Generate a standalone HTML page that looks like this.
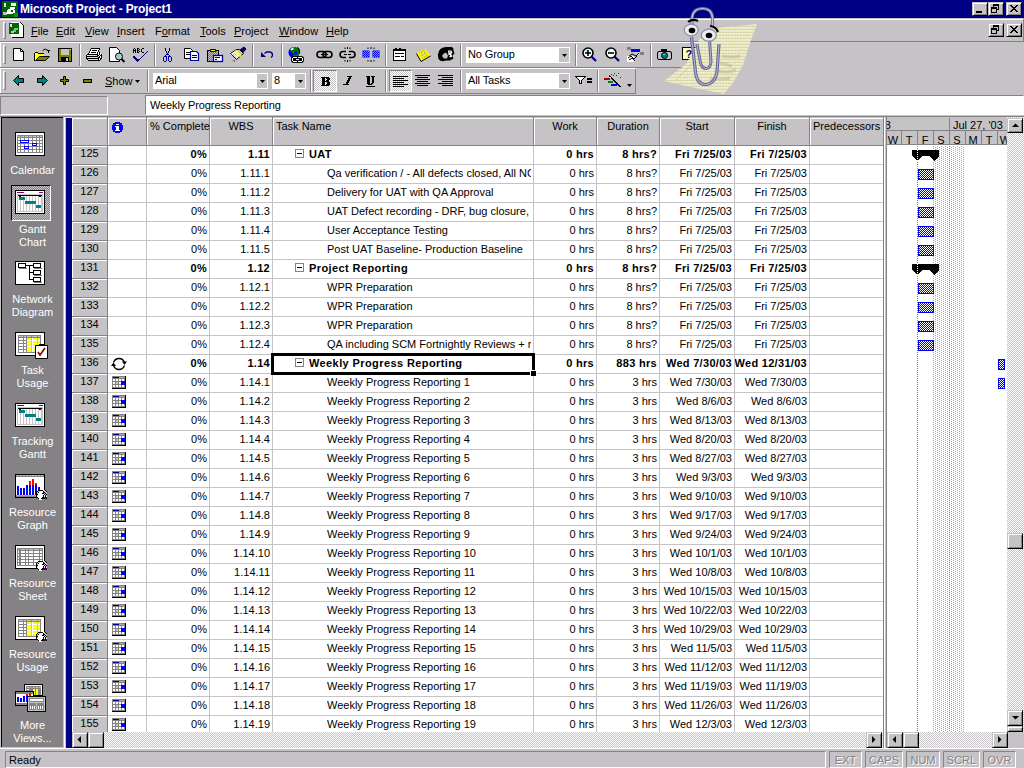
<!DOCTYPE html>
<html><head><meta charset="utf-8"><style>
*{margin:0;padding:0;box-sizing:border-box}
html,body{width:1024px;height:768px;overflow:hidden;background:#c6c3c6;font-family:"Liberation Sans",sans-serif;font-size:11px;color:#000}
div,span,svg{position:absolute}
.t{white-space:nowrap;line-height:13px}
.b{font-weight:bold}
.g{overflow:hidden;white-space:nowrap;line-height:13px}
.r{text-align:right}
.c{text-align:center}
.dith2{background-color:#c6c3c6;background-image:linear-gradient(45deg,#848284 25%,transparent 25%,transparent 75%,#848284 75%),linear-gradient(45deg,#848284 25%,transparent 25%,transparent 75%,#848284 75%);background-size:2px 2px;background-position:0 0,1px 1px}
.dith{background-color:#fff;background-image:linear-gradient(45deg,#c6c3c6 25%,transparent 25%,transparent 75%,#c6c3c6 75%),linear-gradient(45deg,#c6c3c6 25%,transparent 25%,transparent 75%,#c6c3c6 75%);background-size:2px 2px;background-position:0 0,1px 1px}
</style></head><body>

<div style="left:0px;top:0px;width:1024px;height:18px;background:#000084"></div>
<div class="t" style="left:20px;top:2px;color:#fff;font-size:12px;line-height:14px;font-weight:bold;letter-spacing:-0.15px">Microsoft Project - Project1</div>
<svg style="left:2px;top:1px" width="16" height="16" shape-rendering="crispEdges"><rect width="16" height="16" fill="#006400"/><rect x="12" y="12" width="4" height="4" fill="#00a000"/><rect x="2" y="2" width="2" height="4" fill="#e0e0e0"/><rect x="9" y="2" width="5" height="3" fill="#fff"/><path d="M8 6h5v2h-1v1h1v3h-2v1h-4v-1h-2v-2h1v-2h2z" fill="#fff"/><rect x="9" y="9" width="2" height="2" fill="#006400"/><rect x="1" y="11" width="4" height="3" fill="#c0c0c0"/><rect x="5" y="9" width="2" height="4" fill="#fff"/></svg>
<div style="left:972px;top:2px;width:16px;height:14px;background:#c6c3c6;border-top:1px solid #c6c3c6;border-left:1px solid #c6c3c6;border-right:1px solid #000;border-bottom:1px solid #000;box-shadow:inset 1px 1px 0 #fff,inset -1px -1px 0 #848284;"></div>
<div style="left:976px;top:11px;width:6px;height:2px;background:#000"></div>
<div style="left:988px;top:2px;width:16px;height:14px;background:#c6c3c6;border-top:1px solid #c6c3c6;border-left:1px solid #c6c3c6;border-right:1px solid #000;border-bottom:1px solid #000;box-shadow:inset 1px 1px 0 #fff,inset -1px -1px 0 #848284;"></div>
<svg style="left:991px;top:4px" width="9" height="9" shape-rendering="crispEdges"><rect x="2" y="0" width="6" height="2" fill="#000"/><rect x="7" y="2" width="1" height="4" fill="#000"/><rect x="6" y="5" width="1" height="1" fill="#000"/><rect x="2" y="2" width="1" height="1" fill="#000"/><rect x="0" y="3" width="6" height="2" fill="#000"/><rect x="0" y="5" width="1" height="4" fill="#000"/><rect x="5" y="5" width="1" height="4" fill="#000"/><rect x="0" y="8" width="6" height="1" fill="#000"/></svg>
<div style="left:1006px;top:2px;width:16px;height:14px;background:#c6c3c6;border-top:1px solid #c6c3c6;border-left:1px solid #c6c3c6;border-right:1px solid #000;border-bottom:1px solid #000;box-shadow:inset 1px 1px 0 #fff,inset -1px -1px 0 #848284;"></div>
<svg style="left:1010px;top:5px" width="8" height="7" shape-rendering="crispEdges"><path d="M0 0h2v1h1v1h2v-1h1v-1h2v1h-1v1h-1v1h-1v1h1v1h1v1h1v1h-2v-1h-1v-1h-2v1h-1v1h-2v-1h1v-1h1v-1h1v-1h-1v-1h-1v-1h-1z" fill="#000"/></svg>
<div style="left:0px;top:19px;width:1024px;height:1px;background:#fff"></div>
<div style="left:0px;top:41px;width:1024px;height:1px;background:#848284"></div>
<div style="left:3px;top:22px;width:3px;height:17px;border-left:1px solid #fff;border-top:1px solid #fff;border-right:1px solid #848284;border-bottom:1px solid #848284"></div>
<svg style="left:9px;top:22px" width="17" height="17" shape-rendering="crispEdges"><path d="M2 0h9l3 3v12h-12z" fill="#fff"/><rect x="14" y="3" width="1" height="13" fill="#000"/><rect x="3" y="15" width="12" height="1" fill="#000"/><path d="M11 0l3 3" stroke="#000"/><rect x="0" y="1" width="10" height="11" fill="#006400"/><rect x="1" y="2" width="2" height="3" fill="#e0e0e0"/><path d="M5 6h4v2h-2v2h-3v-2h1z" fill="#80c080"/><rect x="2" y="9" width="3" height="2" fill="#c0c0c0"/></svg>
<div class="t" style="left:31px;top:25px;font-size:11px"><u>F</u>ile</div>
<div class="t" style="left:56px;top:25px;font-size:11px"><u>E</u>dit</div>
<div class="t" style="left:85px;top:25px;font-size:11px"><u>V</u>iew</div>
<div class="t" style="left:117px;top:25px;font-size:11px"><u>I</u>nsert</div>
<div class="t" style="left:155px;top:25px;font-size:11px">F<u>o</u>rmat</div>
<div class="t" style="left:200px;top:25px;font-size:11px"><u>T</u>ools</div>
<div class="t" style="left:234px;top:25px;font-size:11px"><u>P</u>roject</div>
<div class="t" style="left:279px;top:25px;font-size:11px"><u>W</u>indow</div>
<div class="t" style="left:326px;top:25px;font-size:11px"><u>H</u>elp</div>
<div style="left:988px;top:23px;width:16px;height:14px;background:#c6c3c6;border-top:1px solid #c6c3c6;border-left:1px solid #c6c3c6;border-right:1px solid #000;border-bottom:1px solid #000;box-shadow:inset 1px 1px 0 #fff,inset -1px -1px 0 #848284;"></div>
<svg style="left:991px;top:25px" width="9" height="9" shape-rendering="crispEdges"><rect x="2" y="0" width="6" height="2" fill="#000"/><rect x="7" y="2" width="1" height="4" fill="#000"/><rect x="6" y="5" width="1" height="1" fill="#000"/><rect x="2" y="2" width="1" height="1" fill="#000"/><rect x="0" y="3" width="6" height="2" fill="#000"/><rect x="0" y="5" width="1" height="4" fill="#000"/><rect x="5" y="5" width="1" height="4" fill="#000"/><rect x="0" y="8" width="6" height="1" fill="#000"/></svg>
<div style="left:1006px;top:23px;width:16px;height:14px;background:#c6c3c6;border-top:1px solid #c6c3c6;border-left:1px solid #c6c3c6;border-right:1px solid #000;border-bottom:1px solid #000;box-shadow:inset 1px 1px 0 #fff,inset -1px -1px 0 #848284;"></div>
<svg style="left:1010px;top:26px" width="8" height="7" shape-rendering="crispEdges"><path d="M0 0h2v1h1v1h2v-1h1v-1h2v1h-1v1h-1v1h-1v1h1v1h1v1h1v1h-2v-1h-1v-1h-2v1h-1v1h-2v-1h1v-1h1v-1h1v-1h-1v-1h-1v-1h-1z" fill="#000"/></svg>
<div style="left:1023px;top:19px;width:1px;height:22px;background:#848284"></div>
<div style="left:0px;top:42px;width:708px;height:1px;background:#fff"></div>
<div style="left:0px;top:42px;width:1px;height:25px;background:#fff"></div>
<div style="left:0px;top:67px;width:708px;height:1px;background:#848284"></div>
<div style="left:707px;top:43px;width:1px;height:24px;background:#848284"></div>
<div style="left:3px;top:45px;width:3px;height:19px;border-left:1px solid #fff;border-top:1px solid #fff;border-right:1px solid #848284;border-bottom:1px solid #848284"></div>
<div style="left:79px;top:44px;width:1px;height:22px;background:#848284"></div><div style="left:80px;top:44px;width:1px;height:22px;background:#fff"></div>
<div style="left:154px;top:44px;width:1px;height:22px;background:#848284"></div><div style="left:155px;top:44px;width:1px;height:22px;background:#fff"></div>
<div style="left:252px;top:44px;width:1px;height:22px;background:#848284"></div><div style="left:253px;top:44px;width:1px;height:22px;background:#fff"></div>
<div style="left:281px;top:44px;width:1px;height:22px;background:#848284"></div><div style="left:282px;top:44px;width:1px;height:22px;background:#fff"></div>
<div style="left:385px;top:44px;width:1px;height:22px;background:#848284"></div><div style="left:386px;top:44px;width:1px;height:22px;background:#fff"></div>
<div style="left:460px;top:44px;width:1px;height:22px;background:#848284"></div><div style="left:461px;top:44px;width:1px;height:22px;background:#fff"></div>
<div style="left:575px;top:44px;width:1px;height:22px;background:#848284"></div><div style="left:576px;top:44px;width:1px;height:22px;background:#fff"></div>
<div style="left:650px;top:44px;width:1px;height:22px;background:#848284"></div><div style="left:651px;top:44px;width:1px;height:22px;background:#fff"></div>
<div style="left:466px;top:47px;width:104px;height:16px;background:#fff;border:1px solid #fff;box-shadow:inset 0 0 0 0 #fff"></div>
<div style="left:559px;top:48px;width:10px;height:14px;background:#c6c3c6"></div>
<div class="t" style="left:468px;top:48px;letter-spacing:-0.1px">No Group</div>
<svg style="left:562px;top:54px" width="5" height="3" viewBox="0 0 5 3"><path d="M0 0H5L2.5 3Z" fill="#000"/></svg>
<div style="left:0px;top:68px;width:636px;height:1px;background:#fff"></div>
<div style="left:0px;top:68px;width:1px;height:25px;background:#fff"></div>
<div style="left:0px;top:93px;width:636px;height:1px;background:#848284"></div>
<div style="left:635px;top:69px;width:1px;height:24px;background:#848284"></div>
<div style="left:3px;top:71px;width:3px;height:19px;border-left:1px solid #fff;border-top:1px solid #fff;border-right:1px solid #848284;border-bottom:1px solid #848284"></div>
<div class="t" style="left:105px;top:75px;"><u>S</u>how</div>
<div style="left:147px;top:70px;width:1px;height:22px;background:#848284"></div><div style="left:148px;top:70px;width:1px;height:22px;background:#fff"></div>
<div style="left:310px;top:70px;width:1px;height:22px;background:#848284"></div><div style="left:311px;top:70px;width:1px;height:22px;background:#fff"></div>
<div style="left:385px;top:70px;width:1px;height:22px;background:#848284"></div><div style="left:386px;top:70px;width:1px;height:22px;background:#fff"></div>
<div style="left:460px;top:70px;width:1px;height:22px;background:#848284"></div><div style="left:461px;top:70px;width:1px;height:22px;background:#fff"></div>
<div style="left:597px;top:70px;width:1px;height:22px;background:#848284"></div><div style="left:598px;top:70px;width:1px;height:22px;background:#fff"></div>
<div style="left:153px;top:73px;width:115px;height:16px;background:#fff;border:1px solid #fff;box-shadow:inset 0 0 0 0 #fff"></div>
<div style="left:257px;top:74px;width:10px;height:14px;background:#c6c3c6"></div>
<div class="t" style="left:155px;top:74px;letter-spacing:-0.1px">Arial</div>
<svg style="left:260px;top:80px" width="5" height="3" viewBox="0 0 5 3"><path d="M0 0H5L2.5 3Z" fill="#000"/></svg>
<div style="left:272px;top:73px;width:34px;height:16px;background:#fff;border:1px solid #fff;box-shadow:inset 0 0 0 0 #fff"></div>
<div style="left:295px;top:74px;width:10px;height:14px;background:#c6c3c6"></div>
<div class="t" style="left:274px;top:74px;letter-spacing:-0.1px">8</div>
<svg style="left:298px;top:80px" width="5" height="3" viewBox="0 0 5 3"><path d="M0 0H5L2.5 3Z" fill="#000"/></svg>

<div style="left:466px;top:73px;width:104px;height:16px;background:#fff;border:1px solid #fff;box-shadow:inset 0 0 0 0 #fff"></div>
<div style="left:559px;top:74px;width:10px;height:14px;background:#c6c3c6"></div>
<div class="t" style="left:468px;top:74px;letter-spacing:-0.1px">All Tasks</div>
<svg style="left:562px;top:80px" width="5" height="3" viewBox="0 0 5 3"><path d="M0 0H5L2.5 3Z" fill="#000"/></svg>
<div style="left:313px;top:70px;width:24px;height:22px;border-top:1px solid #848284;border-left:1px solid #848284;border-right:1px solid #fff;border-bottom:1px solid #fff" class="dith"></div>
<div style="left:389px;top:70px;width:23px;height:22px;border-top:1px solid #848284;border-left:1px solid #848284;border-right:1px solid #fff;border-bottom:1px solid #fff" class="dith"></div>
<svg style="left:13px;top:48px" width="11" height="13" viewBox="0 0 11 13"><path d="M0.5 0.5H7.5L10.5 3.5V12.5H0.5Z" fill="#fff" stroke="#000"/><path d="M7.5 0.5V3.5H10.5" fill="none" stroke="#000"/></svg>
<svg style="left:34px;top:48px" width="17" height="13" viewBox="0 0 17 13"><rect x="1" y="4" width="3" height="1" fill="#000"/><rect x="0" y="5" width="1" height="8" fill="#000"/><rect x="4" y="5" width="6" height="1" fill="#000"/><rect x="1" y="5" width="3" height="7" fill="#fff"/><rect x="1" y="5" width="1" height="1" fill="#ff0"/><rect x="3" y="5" width="1" height="1" fill="#ff0"/><rect x="2" y="6" width="1" height="1" fill="#ff0"/><rect x="1" y="7" width="1" height="1" fill="#ff0"/><rect x="3" y="7" width="1" height="1" fill="#ff0"/><rect x="2" y="8" width="1" height="1" fill="#ff0"/><rect x="1" y="9" width="1" height="1" fill="#ff0"/><rect x="3" y="9" width="1" height="1" fill="#ff0"/><rect x="2" y="10" width="1" height="1" fill="#ff0"/><rect x="1" y="11" width="1" height="1" fill="#ff0"/><rect x="3" y="11" width="1" height="1" fill="#ff0"/><rect x="4" y="6" width="6" height="3" fill="#fff"/><rect x="4" y="6" width="1" height="1" fill="#ff0"/><rect x="6" y="6" width="1" height="1" fill="#ff0"/><rect x="8" y="6" width="1" height="1" fill="#ff0"/><rect x="5" y="7" width="1" height="1" fill="#ff0"/><rect x="7" y="7" width="1" height="1" fill="#ff0"/><rect x="9" y="7" width="1" height="1" fill="#ff0"/><rect x="4" y="8" width="1" height="1" fill="#ff0"/><rect x="6" y="8" width="1" height="1" fill="#ff0"/><rect x="8" y="8" width="1" height="1" fill="#ff0"/><path d="M1.5 12.5L5.5 8.5H15.5L11.5 12.5Z" fill="#808000" stroke="#000"/><path d="M8.5 2.5Q11 -0.5 14 2.5" fill="none" stroke="#000"/><rect x="13" y="2" width="3" height="1" fill="#000"/><rect x="14" y="3" width="1" height="2" fill="#000"/></svg>
<svg style="left:58px;top:48px" width="14" height="14" viewBox="0 0 14 14" shape-rendering="crispEdges"><rect x="0" y="0" width="14" height="14" fill="#000"/><rect x="1" y="1" width="12" height="12" fill="#808000"/><rect x="3" y="1" width="8" height="6" fill="#c6c3c6"/><rect x="3" y="9" width="8" height="5" fill="#000"/><rect x="8" y="10" width="2" height="3" fill="#c6c3c6"/><rect x="12" y="1" width="1" height="1" fill="#fff"/></svg>
<svg style="left:85px;top:48px" width="17" height="13" viewBox="0 0 17 13" shape-rendering="crispEdges"><rect x="6" y="0" width="1" height="1" fill="#000"/><rect x="7" y="0" width="1" height="1" fill="#000"/><rect x="8" y="0" width="1" height="1" fill="#000"/><rect x="9" y="0" width="1" height="1" fill="#000"/><rect x="10" y="0" width="1" height="1" fill="#000"/><rect x="11" y="0" width="1" height="1" fill="#000"/><rect x="12" y="0" width="1" height="1" fill="#000"/><rect x="13" y="0" width="1" height="1" fill="#000"/><rect x="14" y="0" width="1" height="1" fill="#000"/><rect x="5" y="1" width="1" height="1" fill="#000"/><rect x="6" y="1" width="1" height="1" fill="#fff"/><rect x="7" y="1" width="1" height="1" fill="#fff"/><rect x="8" y="1" width="1" height="1" fill="#fff"/><rect x="9" y="1" width="1" height="1" fill="#fff"/><rect x="10" y="1" width="1" height="1" fill="#fff"/><rect x="11" y="1" width="1" height="1" fill="#fff"/><rect x="12" y="1" width="1" height="1" fill="#fff"/><rect x="13" y="1" width="1" height="1" fill="#fff"/><rect x="14" y="1" width="1" height="1" fill="#000"/><rect x="5" y="2" width="1" height="1" fill="#000"/><rect x="6" y="2" width="1" height="1" fill="#fff"/><rect x="7" y="2" width="1" height="1" fill="#000"/><rect x="8" y="2" width="1" height="1" fill="#000"/><rect x="9" y="2" width="1" height="1" fill="#000"/><rect x="10" y="2" width="1" height="1" fill="#000"/><rect x="11" y="2" width="1" height="1" fill="#000"/><rect x="12" y="2" width="1" height="1" fill="#fff"/><rect x="13" y="2" width="1" height="1" fill="#000"/><rect x="4" y="3" width="1" height="1" fill="#000"/><rect x="5" y="3" width="1" height="1" fill="#fff"/><rect x="6" y="3" width="1" height="1" fill="#fff"/><rect x="7" y="3" width="1" height="1" fill="#fff"/><rect x="8" y="3" width="1" height="1" fill="#fff"/><rect x="9" y="3" width="1" height="1" fill="#fff"/><rect x="10" y="3" width="1" height="1" fill="#fff"/><rect x="11" y="3" width="1" height="1" fill="#fff"/><rect x="12" y="3" width="1" height="1" fill="#fff"/><rect x="13" y="3" width="1" height="1" fill="#000"/><rect x="4" y="4" width="1" height="1" fill="#000"/><rect x="5" y="4" width="1" height="1" fill="#fff"/><rect x="6" y="4" width="1" height="1" fill="#000"/><rect x="7" y="4" width="1" height="1" fill="#000"/><rect x="8" y="4" width="1" height="1" fill="#000"/><rect x="9" y="4" width="1" height="1" fill="#000"/><rect x="10" y="4" width="1" height="1" fill="#000"/><rect x="11" y="4" width="1" height="1" fill="#fff"/><rect x="12" y="4" width="1" height="1" fill="#000"/><rect x="13" y="4" width="1" height="1" fill="#fff"/><rect x="14" y="4" width="1" height="1" fill="#000"/><rect x="3" y="5" width="1" height="1" fill="#000"/><rect x="4" y="5" width="1" height="1" fill="#fff"/><rect x="5" y="5" width="1" height="1" fill="#fff"/><rect x="6" y="5" width="1" height="1" fill="#fff"/><rect x="7" y="5" width="1" height="1" fill="#fff"/><rect x="8" y="5" width="1" height="1" fill="#fff"/><rect x="9" y="5" width="1" height="1" fill="#fff"/><rect x="10" y="5" width="1" height="1" fill="#fff"/><rect x="11" y="5" width="1" height="1" fill="#fff"/><rect x="12" y="5" width="1" height="1" fill="#000"/><rect x="13" y="5" width="1" height="1" fill="#fff"/><rect x="14" y="5" width="1" height="1" fill="#000"/><rect x="15" y="5" width="1" height="1" fill="#fff"/><rect x="2" y="6" width="1" height="1" fill="#000"/><rect x="3" y="6" width="1" height="1" fill="#000"/><rect x="4" y="6" width="1" height="1" fill="#000"/><rect x="5" y="6" width="1" height="1" fill="#000"/><rect x="6" y="6" width="1" height="1" fill="#000"/><rect x="7" y="6" width="1" height="1" fill="#000"/><rect x="8" y="6" width="1" height="1" fill="#000"/><rect x="9" y="6" width="1" height="1" fill="#000"/><rect x="10" y="6" width="1" height="1" fill="#000"/><rect x="11" y="6" width="1" height="1" fill="#000"/><rect x="12" y="6" width="1" height="1" fill="#000"/><rect x="13" y="6" width="1" height="1" fill="#fff"/><rect x="14" y="6" width="1" height="1" fill="#000"/><rect x="15" y="6" width="1" height="1" fill="#fff"/><rect x="16" y="6" width="1" height="1" fill="#000"/><rect x="1" y="7" width="1" height="1" fill="#000"/><rect x="2" y="7" width="1" height="1" fill="#e0e0e0"/><rect x="3" y="7" width="1" height="1" fill="#e0e0e0"/><rect x="4" y="7" width="1" height="1" fill="#e0e0e0"/><rect x="5" y="7" width="1" height="1" fill="#e0e0e0"/><rect x="6" y="7" width="1" height="1" fill="#e0e0e0"/><rect x="7" y="7" width="1" height="1" fill="#e0e0e0"/><rect x="8" y="7" width="1" height="1" fill="#e0e0e0"/><rect x="9" y="7" width="1" height="1" fill="#e0e0e0"/><rect x="10" y="7" width="1" height="1" fill="#e0e0e0"/><rect x="11" y="7" width="1" height="1" fill="#e0e0e0"/><rect x="12" y="7" width="1" height="1" fill="#000"/><rect x="13" y="7" width="1" height="1" fill="#000"/><rect x="14" y="7" width="1" height="1" fill="#fff"/><rect x="15" y="7" width="1" height="1" fill="#000"/><rect x="16" y="7" width="1" height="1" fill="#000"/><rect x="1" y="8" width="1" height="1" fill="#000"/><rect x="2" y="8" width="1" height="1" fill="#000"/><rect x="3" y="8" width="1" height="1" fill="#000"/><rect x="4" y="8" width="1" height="1" fill="#000"/><rect x="5" y="8" width="1" height="1" fill="#000"/><rect x="6" y="8" width="1" height="1" fill="#000"/><rect x="7" y="8" width="1" height="1" fill="#000"/><rect x="8" y="8" width="1" height="1" fill="#000"/><rect x="9" y="8" width="1" height="1" fill="#000"/><rect x="10" y="8" width="1" height="1" fill="#000"/><rect x="11" y="8" width="1" height="1" fill="#000"/><rect x="12" y="8" width="1" height="1" fill="#000"/><rect x="13" y="8" width="1" height="1" fill="#fff"/><rect x="14" y="8" width="1" height="1" fill="#000"/><rect x="15" y="8" width="1" height="1" fill="#fff"/><rect x="16" y="8" width="1" height="1" fill="#000"/><rect x="1" y="9" width="1" height="1" fill="#000"/><rect x="2" y="9" width="1" height="1" fill="#e0e0e0"/><rect x="3" y="9" width="1" height="1" fill="#e0e0e0"/><rect x="4" y="9" width="1" height="1" fill="#e0e0e0"/><rect x="5" y="9" width="1" height="1" fill="#e0e0e0"/><rect x="6" y="9" width="1" height="1" fill="#e0e0e0"/><rect x="7" y="9" width="1" height="1" fill="#ff0"/><rect x="8" y="9" width="1" height="1" fill="#ff0"/><rect x="9" y="9" width="1" height="1" fill="#ff0"/><rect x="10" y="9" width="1" height="1" fill="#ff0"/><rect x="11" y="9" width="1" height="1" fill="#e0e0e0"/><rect x="12" y="9" width="1" height="1" fill="#c6c3c6"/><rect x="13" y="9" width="1" height="1" fill="#000"/><rect x="14" y="9" width="1" height="1" fill="#000"/><rect x="15" y="9" width="1" height="1" fill="#fff"/><rect x="16" y="9" width="1" height="1" fill="#000"/><rect x="1" y="10" width="1" height="1" fill="#000"/><rect x="2" y="10" width="1" height="1" fill="#000"/><rect x="3" y="10" width="1" height="1" fill="#000"/><rect x="4" y="10" width="1" height="1" fill="#000"/><rect x="5" y="10" width="1" height="1" fill="#000"/><rect x="6" y="10" width="1" height="1" fill="#000"/><rect x="7" y="10" width="1" height="1" fill="#000"/><rect x="8" y="10" width="1" height="1" fill="#000"/><rect x="9" y="10" width="1" height="1" fill="#000"/><rect x="10" y="10" width="1" height="1" fill="#000"/><rect x="11" y="10" width="1" height="1" fill="#000"/><rect x="12" y="10" width="1" height="1" fill="#000"/><rect x="13" y="10" width="1" height="1" fill="#000"/><rect x="14" y="10" width="1" height="1" fill="#fff"/><rect x="15" y="10" width="1" height="1" fill="#000"/><rect x="16" y="10" width="1" height="1" fill="#000"/><rect x="2" y="11" width="1" height="1" fill="#000"/><rect x="3" y="11" width="1" height="1" fill="#e0e0e0"/><rect x="4" y="11" width="1" height="1" fill="#e0e0e0"/><rect x="5" y="11" width="1" height="1" fill="#e0e0e0"/><rect x="6" y="11" width="1" height="1" fill="#e0e0e0"/><rect x="7" y="11" width="1" height="1" fill="#e0e0e0"/><rect x="8" y="11" width="1" height="1" fill="#e0e0e0"/><rect x="9" y="11" width="1" height="1" fill="#e0e0e0"/><rect x="10" y="11" width="1" height="1" fill="#e0e0e0"/><rect x="11" y="11" width="1" height="1" fill="#e0e0e0"/><rect x="12" y="11" width="1" height="1" fill="#e0e0e0"/><rect x="13" y="11" width="1" height="1" fill="#000"/><rect x="14" y="11" width="1" height="1" fill="#fff"/><rect x="15" y="11" width="1" height="1" fill="#000"/><rect x="3" y="12" width="1" height="1" fill="#000"/><rect x="4" y="12" width="1" height="1" fill="#000"/><rect x="5" y="12" width="1" height="1" fill="#000"/><rect x="6" y="12" width="1" height="1" fill="#000"/><rect x="7" y="12" width="1" height="1" fill="#000"/><rect x="8" y="12" width="1" height="1" fill="#000"/><rect x="9" y="12" width="1" height="1" fill="#000"/><rect x="10" y="12" width="1" height="1" fill="#000"/><rect x="11" y="12" width="1" height="1" fill="#000"/><rect x="12" y="12" width="1" height="1" fill="#000"/><rect x="13" y="12" width="1" height="1" fill="#000"/><rect x="14" y="12" width="1" height="1" fill="#000"/></svg>
<svg style="left:109px;top:47px" width="17" height="16" viewBox="0 0 17 16"><path d="M0.5 0.5H7.5L10.5 3.5V14.5H0.5Z" fill="#fff" stroke="#000"/><circle cx="10" cy="9.5" r="3.5" fill="#c6c3c6" stroke="#000"/><rect x="8" y="8" width="2" height="2" fill="#0ff"/><rect x="10" y="10" width="1" height="1" fill="#0ff"/><path d="M12.5 12L15.5 15" stroke="#000" stroke-width="2"/></svg>
<svg style="left:133px;top:48px" width="15" height="14" viewBox="0 0 15 14" shape-rendering="crispEdges"><rect x="1" y="0" width="1" height="1" fill="#000"/><rect x="4" y="0" width="1" height="1" fill="#000"/><rect x="5" y="0" width="1" height="1" fill="#000"/><rect x="9" y="0" width="1" height="1" fill="#000"/><rect x="10" y="0" width="1" height="1" fill="#000"/><rect x="0" y="1" width="1" height="1" fill="#000"/><rect x="2" y="1" width="1" height="1" fill="#000"/><rect x="4" y="1" width="1" height="1" fill="#000"/><rect x="6" y="1" width="1" height="1" fill="#000"/><rect x="8" y="1" width="1" height="1" fill="#000"/><rect x="0" y="2" width="1" height="1" fill="#000"/><rect x="1" y="2" width="1" height="1" fill="#000"/><rect x="2" y="2" width="1" height="1" fill="#000"/><rect x="4" y="2" width="1" height="1" fill="#000"/><rect x="5" y="2" width="1" height="1" fill="#000"/><rect x="8" y="2" width="1" height="1" fill="#000"/><rect x="0" y="3" width="1" height="1" fill="#000"/><rect x="2" y="3" width="1" height="1" fill="#000"/><rect x="4" y="3" width="1" height="1" fill="#000"/><rect x="6" y="3" width="1" height="1" fill="#000"/><rect x="8" y="3" width="1" height="1" fill="#000"/><rect x="14" y="3" width="1" height="1" fill="#000080"/><rect x="0" y="4" width="1" height="1" fill="#000"/><rect x="2" y="4" width="1" height="1" fill="#000"/><rect x="4" y="4" width="1" height="1" fill="#000"/><rect x="5" y="4" width="1" height="1" fill="#000"/><rect x="9" y="4" width="1" height="1" fill="#000"/><rect x="10" y="4" width="1" height="1" fill="#000"/><rect x="13" y="4" width="1" height="1" fill="#000080"/><rect x="12" y="5" width="1" height="1" fill="#000080"/><rect x="11" y="6" width="1" height="1" fill="#000080"/><rect x="10" y="7" width="1" height="1" fill="#000080"/><rect x="0" y="8" width="1" height="1" fill="#000080"/><rect x="1" y="8" width="1" height="1" fill="#000080"/><rect x="9" y="8" width="1" height="1" fill="#000080"/><rect x="0" y="9" width="1" height="1" fill="#000080"/><rect x="1" y="9" width="1" height="1" fill="#000080"/><rect x="2" y="9" width="1" height="1" fill="#000080"/><rect x="8" y="9" width="1" height="1" fill="#000080"/><rect x="1" y="10" width="1" height="1" fill="#000080"/><rect x="2" y="10" width="1" height="1" fill="#000080"/><rect x="3" y="10" width="1" height="1" fill="#000080"/><rect x="7" y="10" width="1" height="1" fill="#000080"/><rect x="2" y="11" width="1" height="1" fill="#000080"/><rect x="3" y="11" width="1" height="1" fill="#000080"/><rect x="4" y="11" width="1" height="1" fill="#000080"/><rect x="5" y="11" width="1" height="1" fill="#000080"/><rect x="6" y="11" width="1" height="1" fill="#000080"/><rect x="3" y="12" width="1" height="1" fill="#000080"/><rect x="4" y="12" width="1" height="1" fill="#000080"/><rect x="5" y="12" width="1" height="1" fill="#000080"/><rect x="4" y="13" width="1" height="1" fill="#000080"/></svg>
<svg style="left:163px;top:48px" width="10" height="14" viewBox="0 0 10 14" shape-rendering="crispEdges"><rect x="2" y="0" width="1" height="1" fill="#000"/><rect x="6" y="0" width="1" height="1" fill="#000"/><rect x="2" y="1" width="1" height="1" fill="#000"/><rect x="6" y="1" width="1" height="1" fill="#000"/><rect x="2" y="2" width="1" height="1" fill="#000"/><rect x="6" y="2" width="1" height="1" fill="#000"/><rect x="3" y="3" width="1" height="1" fill="#000"/><rect x="5" y="3" width="1" height="1" fill="#000"/><rect x="3" y="4" width="1" height="1" fill="#000"/><rect x="5" y="4" width="1" height="1" fill="#000"/><rect x="4" y="5" width="1" height="1" fill="#000"/><rect x="3" y="6" width="1" height="1" fill="#0000a0"/><rect x="4" y="6" width="1" height="1" fill="#000"/><rect x="5" y="6" width="1" height="1" fill="#0000a0"/><rect x="2" y="7" width="1" height="1" fill="#0000a0"/><rect x="6" y="7" width="1" height="1" fill="#0000a0"/><rect x="1" y="8" width="1" height="1" fill="#0000a0"/><rect x="2" y="8" width="1" height="1" fill="#0000a0"/><rect x="3" y="8" width="1" height="1" fill="#0000a0"/><rect x="5" y="8" width="1" height="1" fill="#0000a0"/><rect x="6" y="8" width="1" height="1" fill="#0000a0"/><rect x="7" y="8" width="1" height="1" fill="#0000a0"/><rect x="0" y="9" width="1" height="1" fill="#0000a0"/><rect x="3" y="9" width="1" height="1" fill="#0000a0"/><rect x="5" y="9" width="1" height="1" fill="#0000a0"/><rect x="8" y="9" width="1" height="1" fill="#0000a0"/><rect x="0" y="10" width="1" height="1" fill="#0000a0"/><rect x="3" y="10" width="1" height="1" fill="#0000a0"/><rect x="5" y="10" width="1" height="1" fill="#0000a0"/><rect x="8" y="10" width="1" height="1" fill="#0000a0"/><rect x="0" y="11" width="1" height="1" fill="#0000a0"/><rect x="3" y="11" width="1" height="1" fill="#0000a0"/><rect x="5" y="11" width="1" height="1" fill="#0000a0"/><rect x="8" y="11" width="1" height="1" fill="#0000a0"/><rect x="0" y="12" width="1" height="1" fill="#0000a0"/><rect x="3" y="12" width="1" height="1" fill="#0000a0"/><rect x="5" y="12" width="1" height="1" fill="#0000a0"/><rect x="8" y="12" width="1" height="1" fill="#0000a0"/><rect x="1" y="13" width="1" height="1" fill="#0000a0"/><rect x="2" y="13" width="1" height="1" fill="#0000a0"/><rect x="6" y="13" width="1" height="1" fill="#0000a0"/><rect x="7" y="13" width="1" height="1" fill="#0000a0"/></svg>
<svg style="left:184px;top:48px" width="16" height="14" viewBox="0 0 16 14"><path d="M0.5 0.5H6.5L8.5 2.5V10.5H0.5Z" fill="#fff" stroke="#000"/><rect x="2" y="4" width="4" height="1" fill="#000"/><rect x="2" y="6" width="4" height="1" fill="#000"/><path d="M6.5 3.5H12.5L14.5 5.5V12.5H6.5Z" fill="#fff" stroke="#0000a0" stroke-width="1.2"/><rect x="8" y="7" width="5" height="1" fill="#000"/><rect x="8" y="9" width="5" height="1" fill="#000"/></svg>
<svg style="left:207px;top:48px" width="17" height="15" viewBox="0 0 17 15"><rect x="0.5" y="2.5" width="11" height="11" fill="#808000" stroke="#000"/><rect x="1" y="3" width="10" height="10" fill="#c6c3c6"/><rect x="1" y="3" width="1" height="1" fill="#808000"/><rect x="3" y="3" width="1" height="1" fill="#808000"/><rect x="5" y="3" width="1" height="1" fill="#808000"/><rect x="7" y="3" width="1" height="1" fill="#808000"/><rect x="9" y="3" width="1" height="1" fill="#808000"/><rect x="2" y="4" width="1" height="1" fill="#808000"/><rect x="4" y="4" width="1" height="1" fill="#808000"/><rect x="6" y="4" width="1" height="1" fill="#808000"/><rect x="8" y="4" width="1" height="1" fill="#808000"/><rect x="10" y="4" width="1" height="1" fill="#808000"/><rect x="1" y="5" width="1" height="1" fill="#808000"/><rect x="3" y="5" width="1" height="1" fill="#808000"/><rect x="5" y="5" width="1" height="1" fill="#808000"/><rect x="7" y="5" width="1" height="1" fill="#808000"/><rect x="9" y="5" width="1" height="1" fill="#808000"/><rect x="2" y="6" width="1" height="1" fill="#808000"/><rect x="4" y="6" width="1" height="1" fill="#808000"/><rect x="6" y="6" width="1" height="1" fill="#808000"/><rect x="8" y="6" width="1" height="1" fill="#808000"/><rect x="10" y="6" width="1" height="1" fill="#808000"/><rect x="1" y="7" width="1" height="1" fill="#808000"/><rect x="3" y="7" width="1" height="1" fill="#808000"/><rect x="5" y="7" width="1" height="1" fill="#808000"/><rect x="7" y="7" width="1" height="1" fill="#808000"/><rect x="9" y="7" width="1" height="1" fill="#808000"/><rect x="2" y="8" width="1" height="1" fill="#808000"/><rect x="4" y="8" width="1" height="1" fill="#808000"/><rect x="6" y="8" width="1" height="1" fill="#808000"/><rect x="8" y="8" width="1" height="1" fill="#808000"/><rect x="10" y="8" width="1" height="1" fill="#808000"/><rect x="1" y="9" width="1" height="1" fill="#808000"/><rect x="3" y="9" width="1" height="1" fill="#808000"/><rect x="5" y="9" width="1" height="1" fill="#808000"/><rect x="7" y="9" width="1" height="1" fill="#808000"/><rect x="9" y="9" width="1" height="1" fill="#808000"/><rect x="2" y="10" width="1" height="1" fill="#808000"/><rect x="4" y="10" width="1" height="1" fill="#808000"/><rect x="6" y="10" width="1" height="1" fill="#808000"/><rect x="8" y="10" width="1" height="1" fill="#808000"/><rect x="10" y="10" width="1" height="1" fill="#808000"/><rect x="1" y="11" width="1" height="1" fill="#808000"/><rect x="3" y="11" width="1" height="1" fill="#808000"/><rect x="5" y="11" width="1" height="1" fill="#808000"/><rect x="7" y="11" width="1" height="1" fill="#808000"/><rect x="9" y="11" width="1" height="1" fill="#808000"/><rect x="2" y="12" width="1" height="1" fill="#808000"/><rect x="4" y="12" width="1" height="1" fill="#808000"/><rect x="6" y="12" width="1" height="1" fill="#808000"/><rect x="8" y="12" width="1" height="1" fill="#808000"/><rect x="10" y="12" width="1" height="1" fill="#808000"/><path d="M3.5 3.5V1.5H8.5V3.5Z" fill="#ff0" stroke="#000"/><rect x="6.5" y="7.5" width="9" height="6" fill="#fff" stroke="#0000a0" stroke-width="1.3"/><rect x="8" y="9" width="5" height="1" fill="#0000a0"/><rect x="8" y="11" width="2" height="1" fill="#0000a0"/></svg>
<svg style="left:226px;top:44px" width="22" height="20" viewBox="0 0 22 20"><path d="M4.5 9.5L10.5 5.5H13.5L17.5 9.5L10.5 15.5Z" fill="#c6c3c6" stroke="#000"/><path d="M5 9.8L10 6.2L14.5 11L10.5 14.8Z" fill="#fff"/><path d="M9.5 7L15 12.5" stroke="#ff0" stroke-width="2"/><path d="M6.5 10L10.5 14M8 9L11.5 12.5" stroke="#a0a0a0" stroke-width="0.8"/><path d="M14.5 5.5L18 3L20 5L17 8.5Z" fill="#000080" stroke="#000"/><path d="M4 17.5H9L10 16" stroke="#ff0" stroke-width="1.2" stroke-dasharray="1.5 1"/></svg>
<svg style="left:260px;top:49px" width="15" height="10" viewBox="0 0 15 10"><path d="M4.5 4.5L6.5 3H10Q12.5 3.5 12.5 6Q12.5 7.5 11 8.5" fill="none" stroke="#000080" stroke-width="1.3"/><path d="M1 3V8H6Z" fill="#000080"/></svg>
<svg style="left:288px;top:46px" width="17" height="17" viewBox="0 0 17 17"><circle cx="6" cy="6.5" r="5.5" fill="#00f"/><path d="M1.5 3.5Q4 0.5 7 1L12 4L11.5 7Q10 11 6.5 11L5 9L6.5 8Q4 7.5 3.5 6Z" fill="#008000"/><path d="M2.5 3Q4 1.5 6 1.5L5 4H3Z" fill="#fff"/><path d="M6 5.5L9 5L9.5 8L7 9Z" fill="#00f"/><path d="M9 1.5Q12 3 11.5 7.5" fill="none" stroke="#000" stroke-width="1.2"/><rect x="3" y="10" width="13" height="7" rx="3" fill="#000"/><rect x="5" y="11" width="4" height="1" fill="#fff"/><rect x="10" y="11" width="4" height="1" fill="#fff"/><rect x="5" y="15" width="4" height="1" fill="#fff"/><rect x="10" y="15" width="4" height="1" fill="#fff"/><rect x="4" y="12" width="1" height="3" fill="#fff"/><rect x="14" y="12" width="1" height="3" fill="#fff"/><rect x="8" y="13" width="3" height="1" fill="#fff"/></svg>
<svg style="left:316px;top:50px" width="18" height="9" viewBox="0 0 18 9"><rect x="1" y="1.5" width="9" height="6" rx="3" fill="none" stroke="#000" stroke-width="1.6"/><rect x="7" y="1.5" width="9" height="6" rx="3" fill="none" stroke="#000" stroke-width="1.6"/><path d="M5 4.5H12" stroke="#000"/></svg>
<svg style="left:339px;top:47px" width="18" height="15" viewBox="0 0 18 15"><path d="M7 4.5H4A3 3 0 0 0 4 10.5H7M10 4.5H13A3 3 0 0 1 13 10.5H10" fill="none" stroke="#000" stroke-width="1.6"/><path d="M5 7.5H8M9 7.5H12" stroke="#000"/><path d="M6 0.5V2M8.5 0V2M11 0.5V2M6 13V14.5M8.5 13V15M11 13V14.5" stroke="#000"/></svg>
<svg style="left:362px;top:47px" width="18" height="15" viewBox="0 0 18 15"><rect x="0.5" y="3.5" width="7" height="7" fill="#00f"/><rect x="10.5" y="3.5" width="7" height="7" fill="#00f"/><rect x="1" y="4" width="6" height="6" fill="#8080ff"/><rect x="1" y="4" width="1" height="1" fill="#00f"/><rect x="3" y="4" width="1" height="1" fill="#00f"/><rect x="5" y="4" width="1" height="1" fill="#00f"/><rect x="2" y="5" width="1" height="1" fill="#00f"/><rect x="4" y="5" width="1" height="1" fill="#00f"/><rect x="6" y="5" width="1" height="1" fill="#00f"/><rect x="1" y="6" width="1" height="1" fill="#00f"/><rect x="3" y="6" width="1" height="1" fill="#00f"/><rect x="5" y="6" width="1" height="1" fill="#00f"/><rect x="2" y="7" width="1" height="1" fill="#00f"/><rect x="4" y="7" width="1" height="1" fill="#00f"/><rect x="6" y="7" width="1" height="1" fill="#00f"/><rect x="1" y="8" width="1" height="1" fill="#00f"/><rect x="3" y="8" width="1" height="1" fill="#00f"/><rect x="5" y="8" width="1" height="1" fill="#00f"/><rect x="2" y="9" width="1" height="1" fill="#00f"/><rect x="4" y="9" width="1" height="1" fill="#00f"/><rect x="6" y="9" width="1" height="1" fill="#00f"/><rect x="11" y="4" width="6" height="6" fill="#8080ff"/><rect x="11" y="4" width="1" height="1" fill="#00f"/><rect x="13" y="4" width="1" height="1" fill="#00f"/><rect x="15" y="4" width="1" height="1" fill="#00f"/><rect x="12" y="5" width="1" height="1" fill="#00f"/><rect x="14" y="5" width="1" height="1" fill="#00f"/><rect x="16" y="5" width="1" height="1" fill="#00f"/><rect x="11" y="6" width="1" height="1" fill="#00f"/><rect x="13" y="6" width="1" height="1" fill="#00f"/><rect x="15" y="6" width="1" height="1" fill="#00f"/><rect x="12" y="7" width="1" height="1" fill="#00f"/><rect x="14" y="7" width="1" height="1" fill="#00f"/><rect x="16" y="7" width="1" height="1" fill="#00f"/><rect x="11" y="8" width="1" height="1" fill="#00f"/><rect x="13" y="8" width="1" height="1" fill="#00f"/><rect x="15" y="8" width="1" height="1" fill="#00f"/><rect x="12" y="9" width="1" height="1" fill="#00f"/><rect x="14" y="9" width="1" height="1" fill="#00f"/><rect x="16" y="9" width="1" height="1" fill="#00f"/><path d="M6 0.5V2M9 0V2M12 0.5V2M6 13V14.5M9 13V15M12 13V14.5" stroke="#000"/></svg>
<svg style="left:393px;top:48px" width="14" height="13" viewBox="0 0 14 13"><rect x="0.5" y="1.5" width="12" height="11" fill="#fff" stroke="#000"/><rect x="1" y="1" width="11" height="2" fill="#000"/><rect x="2" y="0" width="2" height="2" fill="#000"/><rect x="6" y="0" width="2" height="2" fill="#000"/><rect x="2" y="5" width="9" height="1" fill="#000"/><rect x="2" y="8" width="5" height="1" fill="#000"/><rect x="8" y="8" width="3" height="1" fill="#000"/></svg>
<svg style="left:415px;top:47px" width="17" height="16" viewBox="0 0 17 16"><path d="M1.5 6.5L10.5 1.5L15.5 9L6 14.5Z" fill="#ff0"/><path d="M1.5 6.5L6 14.5L15.5 9" fill="none" stroke="#000"/><path d="M4 6.5L11 2.5M5.5 9L12.5 5M7 11.5L14 7.5M6 5L9.5 11M8.5 3.5L12 9.5" stroke="#808080" stroke-width="0.8" stroke-dasharray="1 1"/></svg>
<svg style="left:437px;top:46px" width="18" height="17" viewBox="0 0 18 17"><path d="M2 5Q4 1 10 1H15Q17 2 16.5 4.5L17.5 7.5L15.5 9.5L16.5 12.5L13 14.5H9Q4 16.5 1.5 13Q0 9 2 5Z" fill="#000"/><path d="M5 10Q6 7 9 6.5L11 9.5L10 12.5H7Z" fill="#c6c3c6"/><path d="M11 4.5H14.5L15.5 7L14 8L15.5 10.5L13 11.5L11.5 9Z" fill="#fff"/><path d="M12.5 6H13.5M12 9.5H13" stroke="#000"/></svg>
<svg style="left:582px;top:47px" width="16" height="16" viewBox="0 0 16 16"><circle cx="6" cy="6" r="5" fill="#fff" stroke="#000" stroke-width="1.6"/><path d="M3.5 4.5Q4 3 5.5 2.5" stroke="#0ff" fill="none"/><path d="M9.5 9.5L14 14" stroke="#000080" stroke-width="2.2"/><path d="M3 6H9" stroke="#000" stroke-width="1.6"/><path d="M6 3V9" stroke="#000" stroke-width="1.6"/></svg>
<svg style="left:605px;top:47px" width="16" height="16" viewBox="0 0 16 16"><circle cx="6" cy="6" r="5" fill="#fff" stroke="#000" stroke-width="1.6"/><path d="M3.5 4.5Q4 3 5.5 2.5" stroke="#0ff" fill="none"/><path d="M9.5 9.5L14 14" stroke="#000080" stroke-width="2.2"/><path d="M3 6H9" stroke="#000" stroke-width="1.6"/></svg>
<svg style="left:627px;top:47px" width="17" height="16" viewBox="0 0 17 16"><rect x="0" y="0" width="4" height="3" fill="#808080"/><rect x="4" y="2" width="9" height="3" fill="#00f"/><rect x="13" y="5" width="4" height="3" fill="#808080"/><path d="M1 10L5 7L9 9L12 6" stroke="#000" fill="none"/><rect x="0" y="9" width="7" height="6" fill="#fff"/><path d="M1 11L4 9L7 12L10 9M2 13L5 11L8 14" stroke="#000" fill="none"/></svg>
<svg style="left:657px;top:49px" width="15" height="11" viewBox="0 0 15 11"><rect x="4" y="0" width="6" height="2" fill="#000"/><rect x="0.5" y="2.5" width="14" height="8" rx="1.5" fill="#c6c3c6" stroke="#000"/><circle cx="7.5" cy="6.5" r="3" fill="#008080" stroke="#000"/><rect x="6" y="5" width="2" height="1" fill="#0ff"/></svg>
<svg style="left:682px;top:47px" width="15" height="13" viewBox="0 0 15 13"><rect x="0.5" y="0.5" width="13" height="12" fill="#ffffc0" stroke="#000"/><text x="3.5" y="11" font-family="Liberation Sans" font-weight="bold" font-size="11" fill="#000080">?</text></svg>
<svg style="left:13px;top:75px" width="11" height="11" viewBox="0 0 11 11"><path d="M0.5 5.5L5.5 0.5V3.5H10.5V7.5H5.5V10.5Z" fill="#008080" stroke="#000"/></svg>
<svg style="left:37px;top:75px" width="11" height="11" viewBox="0 0 11 11"><path d="M10.5 5.5L5.5 0.5V3.5H0.5V7.5H5.5V10.5Z" fill="#008080" stroke="#000"/></svg>
<svg style="left:60px;top:76px" width="10" height="10" viewBox="0 0 10 10"><path d="M3.5 0.5H5.5V3.5H8.5V5.5H5.5V8.5H3.5V5.5H0.5V3.5H3.5Z" fill="#808000" stroke="#000"/></svg>
<svg style="left:83px;top:79px" width="10" height="4" viewBox="0 0 10 4"><rect x="0.5" y="0.5" width="8" height="3" fill="#808000" stroke="#000"/></svg>
<svg style="left:135px;top:80px" width="5" height="3" viewBox="0 0 5 3"><path d="M0 0H5L2.5 3Z" fill="#000"/></svg>
<svg style="left:321px;top:77px" width="9" height="9" viewBox="0 0 9 9" shape-rendering="crispEdges"><rect x="0" y="0" width="1" height="1" fill="#000"/><rect x="1" y="0" width="1" height="1" fill="#000"/><rect x="2" y="0" width="1" height="1" fill="#000"/><rect x="3" y="0" width="1" height="1" fill="#000"/><rect x="4" y="0" width="1" height="1" fill="#000"/><rect x="5" y="0" width="1" height="1" fill="#000"/><rect x="6" y="0" width="1" height="1" fill="#000"/><rect x="7" y="0" width="1" height="1" fill="#000"/><rect x="1" y="1" width="1" height="1" fill="#000"/><rect x="2" y="1" width="1" height="1" fill="#000"/><rect x="3" y="1" width="1" height="1" fill="#000"/><rect x="5" y="1" width="1" height="1" fill="#000"/><rect x="6" y="1" width="1" height="1" fill="#000"/><rect x="7" y="1" width="1" height="1" fill="#000"/><rect x="8" y="1" width="1" height="1" fill="#000"/><rect x="1" y="2" width="1" height="1" fill="#000"/><rect x="2" y="2" width="1" height="1" fill="#000"/><rect x="3" y="2" width="1" height="1" fill="#000"/><rect x="6" y="2" width="1" height="1" fill="#000"/><rect x="7" y="2" width="1" height="1" fill="#000"/><rect x="8" y="2" width="1" height="1" fill="#000"/><rect x="1" y="3" width="1" height="1" fill="#000"/><rect x="2" y="3" width="1" height="1" fill="#000"/><rect x="3" y="3" width="1" height="1" fill="#000"/><rect x="5" y="3" width="1" height="1" fill="#000"/><rect x="6" y="3" width="1" height="1" fill="#000"/><rect x="7" y="3" width="1" height="1" fill="#000"/><rect x="1" y="4" width="1" height="1" fill="#000"/><rect x="2" y="4" width="1" height="1" fill="#000"/><rect x="3" y="4" width="1" height="1" fill="#000"/><rect x="4" y="4" width="1" height="1" fill="#000"/><rect x="5" y="4" width="1" height="1" fill="#000"/><rect x="6" y="4" width="1" height="1" fill="#000"/><rect x="7" y="4" width="1" height="1" fill="#000"/><rect x="1" y="5" width="1" height="1" fill="#000"/><rect x="2" y="5" width="1" height="1" fill="#000"/><rect x="3" y="5" width="1" height="1" fill="#000"/><rect x="6" y="5" width="1" height="1" fill="#000"/><rect x="7" y="5" width="1" height="1" fill="#000"/><rect x="8" y="5" width="1" height="1" fill="#000"/><rect x="1" y="6" width="1" height="1" fill="#000"/><rect x="2" y="6" width="1" height="1" fill="#000"/><rect x="3" y="6" width="1" height="1" fill="#000"/><rect x="6" y="6" width="1" height="1" fill="#000"/><rect x="7" y="6" width="1" height="1" fill="#000"/><rect x="8" y="6" width="1" height="1" fill="#000"/><rect x="1" y="7" width="1" height="1" fill="#000"/><rect x="2" y="7" width="1" height="1" fill="#000"/><rect x="3" y="7" width="1" height="1" fill="#000"/><rect x="5" y="7" width="1" height="1" fill="#000"/><rect x="6" y="7" width="1" height="1" fill="#000"/><rect x="7" y="7" width="1" height="1" fill="#000"/><rect x="8" y="7" width="1" height="1" fill="#000"/><rect x="0" y="8" width="1" height="1" fill="#000"/><rect x="1" y="8" width="1" height="1" fill="#000"/><rect x="2" y="8" width="1" height="1" fill="#000"/><rect x="3" y="8" width="1" height="1" fill="#000"/><rect x="4" y="8" width="1" height="1" fill="#000"/><rect x="5" y="8" width="1" height="1" fill="#000"/><rect x="6" y="8" width="1" height="1" fill="#000"/><rect x="7" y="8" width="1" height="1" fill="#000"/></svg>
<svg style="left:343px;top:76px" width="9" height="9" viewBox="0 0 9 9" shape-rendering="crispEdges"><rect x="4" y="0" width="1" height="1" fill="#000"/><rect x="5" y="0" width="1" height="1" fill="#000"/><rect x="6" y="0" width="1" height="1" fill="#000"/><rect x="7" y="0" width="1" height="1" fill="#000"/><rect x="8" y="0" width="1" height="1" fill="#000"/><rect x="6" y="1" width="1" height="1" fill="#000"/><rect x="7" y="1" width="1" height="1" fill="#000"/><rect x="5" y="2" width="1" height="1" fill="#000"/><rect x="6" y="2" width="1" height="1" fill="#000"/><rect x="7" y="2" width="1" height="1" fill="#000"/><rect x="5" y="3" width="1" height="1" fill="#000"/><rect x="6" y="3" width="1" height="1" fill="#000"/><rect x="4" y="4" width="1" height="1" fill="#000"/><rect x="5" y="4" width="1" height="1" fill="#000"/><rect x="6" y="4" width="1" height="1" fill="#000"/><rect x="4" y="5" width="1" height="1" fill="#000"/><rect x="5" y="5" width="1" height="1" fill="#000"/><rect x="3" y="6" width="1" height="1" fill="#000"/><rect x="4" y="6" width="1" height="1" fill="#000"/><rect x="5" y="6" width="1" height="1" fill="#000"/><rect x="3" y="7" width="1" height="1" fill="#000"/><rect x="4" y="7" width="1" height="1" fill="#000"/><rect x="0" y="8" width="1" height="1" fill="#000"/><rect x="1" y="8" width="1" height="1" fill="#000"/><rect x="2" y="8" width="1" height="1" fill="#000"/><rect x="3" y="8" width="1" height="1" fill="#000"/><rect x="4" y="8" width="1" height="1" fill="#000"/><rect x="5" y="8" width="1" height="1" fill="#000"/></svg>
<svg style="left:366px;top:76px" width="9" height="11" viewBox="0 0 9 11" shape-rendering="crispEdges"><rect x="0" y="0" width="1" height="1" fill="#000"/><rect x="1" y="0" width="1" height="1" fill="#000"/><rect x="2" y="0" width="1" height="1" fill="#000"/><rect x="3" y="0" width="1" height="1" fill="#000"/><rect x="5" y="0" width="1" height="1" fill="#000"/><rect x="6" y="0" width="1" height="1" fill="#000"/><rect x="7" y="0" width="1" height="1" fill="#000"/><rect x="8" y="0" width="1" height="1" fill="#000"/><rect x="1" y="1" width="1" height="1" fill="#000"/><rect x="2" y="1" width="1" height="1" fill="#000"/><rect x="3" y="1" width="1" height="1" fill="#000"/><rect x="6" y="1" width="1" height="1" fill="#000"/><rect x="7" y="1" width="1" height="1" fill="#000"/><rect x="1" y="2" width="1" height="1" fill="#000"/><rect x="2" y="2" width="1" height="1" fill="#000"/><rect x="3" y="2" width="1" height="1" fill="#000"/><rect x="6" y="2" width="1" height="1" fill="#000"/><rect x="7" y="2" width="1" height="1" fill="#000"/><rect x="1" y="3" width="1" height="1" fill="#000"/><rect x="2" y="3" width="1" height="1" fill="#000"/><rect x="3" y="3" width="1" height="1" fill="#000"/><rect x="6" y="3" width="1" height="1" fill="#000"/><rect x="7" y="3" width="1" height="1" fill="#000"/><rect x="1" y="4" width="1" height="1" fill="#000"/><rect x="2" y="4" width="1" height="1" fill="#000"/><rect x="3" y="4" width="1" height="1" fill="#000"/><rect x="6" y="4" width="1" height="1" fill="#000"/><rect x="7" y="4" width="1" height="1" fill="#000"/><rect x="1" y="5" width="1" height="1" fill="#000"/><rect x="2" y="5" width="1" height="1" fill="#000"/><rect x="3" y="5" width="1" height="1" fill="#000"/><rect x="6" y="5" width="1" height="1" fill="#000"/><rect x="7" y="5" width="1" height="1" fill="#000"/><rect x="1" y="6" width="1" height="1" fill="#000"/><rect x="2" y="6" width="1" height="1" fill="#000"/><rect x="3" y="6" width="1" height="1" fill="#000"/><rect x="6" y="6" width="1" height="1" fill="#000"/><rect x="7" y="6" width="1" height="1" fill="#000"/><rect x="1" y="7" width="1" height="1" fill="#000"/><rect x="2" y="7" width="1" height="1" fill="#000"/><rect x="3" y="7" width="1" height="1" fill="#000"/><rect x="5" y="7" width="1" height="1" fill="#000"/><rect x="6" y="7" width="1" height="1" fill="#000"/><rect x="2" y="8" width="1" height="1" fill="#000"/><rect x="3" y="8" width="1" height="1" fill="#000"/><rect x="4" y="8" width="1" height="1" fill="#000"/><rect x="5" y="8" width="1" height="1" fill="#000"/><rect x="0" y="10" width="1" height="1" fill="#000"/><rect x="1" y="10" width="1" height="1" fill="#000"/><rect x="2" y="10" width="1" height="1" fill="#000"/><rect x="3" y="10" width="1" height="1" fill="#000"/><rect x="4" y="10" width="1" height="1" fill="#000"/><rect x="5" y="10" width="1" height="1" fill="#000"/><rect x="6" y="10" width="1" height="1" fill="#000"/><rect x="7" y="10" width="1" height="1" fill="#000"/><rect x="8" y="10" width="1" height="1" fill="#000"/></svg>
<svg style="left:393px;top:76px" width="15" height="11" viewBox="0 0 15 11" shape-rendering="crispEdges"><rect x="0" y="0" width="15" height="1" fill="#000"/><rect x="0" y="2" width="11" height="1" fill="#000"/><rect x="0" y="4" width="15" height="1" fill="#000"/><rect x="0" y="6" width="11" height="1" fill="#000"/><rect x="0" y="8" width="15" height="1" fill="#000"/><rect x="0" y="10" width="11" height="1" fill="#000"/></svg>
<svg style="left:415px;top:75px" width="15" height="11" viewBox="0 0 15 11" shape-rendering="crispEdges"><rect x="0" y="0" width="15" height="1" fill="#000"/><rect x="2" y="2" width="11" height="1" fill="#000"/><rect x="0" y="4" width="15" height="1" fill="#000"/><rect x="2" y="6" width="11" height="1" fill="#000"/><rect x="0" y="8" width="15" height="1" fill="#000"/><rect x="2" y="10" width="11" height="1" fill="#000"/></svg>
<svg style="left:438px;top:75px" width="15" height="11" viewBox="0 0 15 11" shape-rendering="crispEdges"><rect x="0" y="0" width="15" height="1" fill="#000"/><rect x="4" y="2" width="11" height="1" fill="#000"/><rect x="0" y="4" width="15" height="1" fill="#000"/><rect x="4" y="6" width="11" height="1" fill="#000"/><rect x="0" y="8" width="15" height="1" fill="#000"/><rect x="4" y="10" width="11" height="1" fill="#000"/></svg>
<svg style="left:575px;top:76px" width="17" height="8" viewBox="0 0 17 8" shape-rendering="crispEdges"><rect x="0" y="0" width="1" height="1" fill="#000"/><rect x="1" y="0" width="1" height="1" fill="#000"/><rect x="2" y="0" width="1" height="1" fill="#000"/><rect x="3" y="0" width="1" height="1" fill="#000"/><rect x="4" y="0" width="1" height="1" fill="#000"/><rect x="5" y="0" width="1" height="1" fill="#000"/><rect x="6" y="0" width="1" height="1" fill="#000"/><rect x="7" y="0" width="1" height="1" fill="#000"/><rect x="8" y="0" width="1" height="1" fill="#000"/><rect x="9" y="0" width="1" height="1" fill="#000"/><rect x="10" y="0" width="1" height="1" fill="#000"/><rect x="1" y="1" width="1" height="1" fill="#000"/><rect x="2" y="1" width="1" height="1" fill="#fff"/><rect x="3" y="1" width="1" height="1" fill="#fff"/><rect x="4" y="1" width="1" height="1" fill="#fff"/><rect x="5" y="1" width="1" height="1" fill="#fff"/><rect x="6" y="1" width="1" height="1" fill="#fff"/><rect x="7" y="1" width="1" height="1" fill="#fff"/><rect x="8" y="1" width="1" height="1" fill="#fff"/><rect x="9" y="1" width="1" height="1" fill="#000"/><rect x="2" y="2" width="1" height="1" fill="#000"/><rect x="3" y="2" width="1" height="1" fill="#fff"/><rect x="4" y="2" width="1" height="1" fill="#fff"/><rect x="5" y="2" width="1" height="1" fill="#fff"/><rect x="6" y="2" width="1" height="1" fill="#fff"/><rect x="7" y="2" width="1" height="1" fill="#fff"/><rect x="8" y="2" width="1" height="1" fill="#000"/><rect x="12" y="2" width="1" height="1" fill="#000"/><rect x="13" y="2" width="1" height="1" fill="#000"/><rect x="14" y="2" width="1" height="1" fill="#000"/><rect x="15" y="2" width="1" height="1" fill="#000"/><rect x="16" y="2" width="1" height="1" fill="#000"/><rect x="3" y="3" width="1" height="1" fill="#000"/><rect x="4" y="3" width="1" height="1" fill="#fff"/><rect x="5" y="3" width="1" height="1" fill="#fff"/><rect x="6" y="3" width="1" height="1" fill="#fff"/><rect x="7" y="3" width="1" height="1" fill="#000"/><rect x="12" y="3" width="1" height="1" fill="#000"/><rect x="13" y="3" width="1" height="1" fill="#000"/><rect x="14" y="3" width="1" height="1" fill="#000"/><rect x="15" y="3" width="1" height="1" fill="#000"/><rect x="16" y="3" width="1" height="1" fill="#000"/><rect x="4" y="4" width="1" height="1" fill="#000"/><rect x="5" y="4" width="1" height="1" fill="#fff"/><rect x="6" y="4" width="1" height="1" fill="#000"/><rect x="4" y="5" width="1" height="1" fill="#000"/><rect x="5" y="5" width="1" height="1" fill="#fff"/><rect x="6" y="5" width="1" height="1" fill="#000"/><rect x="12" y="5" width="1" height="1" fill="#000"/><rect x="13" y="5" width="1" height="1" fill="#000"/><rect x="14" y="5" width="1" height="1" fill="#000"/><rect x="15" y="5" width="1" height="1" fill="#000"/><rect x="16" y="5" width="1" height="1" fill="#000"/><rect x="4" y="6" width="1" height="1" fill="#000"/><rect x="5" y="6" width="1" height="1" fill="#fff"/><rect x="6" y="6" width="1" height="1" fill="#000"/><rect x="12" y="6" width="1" height="1" fill="#000"/><rect x="13" y="6" width="1" height="1" fill="#000"/><rect x="14" y="6" width="1" height="1" fill="#000"/><rect x="15" y="6" width="1" height="1" fill="#000"/><rect x="16" y="6" width="1" height="1" fill="#000"/><rect x="4" y="7" width="1" height="1" fill="#000"/><rect x="5" y="7" width="1" height="1" fill="#000"/><rect x="6" y="7" width="1" height="1" fill="#000"/></svg>
<svg style="left:603px;top:72px" width="20" height="16" viewBox="0 0 20 16" shape-rendering="crispEdges"><rect x="8" y="2" width="1" height="1" fill="#a00000"/><rect x="11" y="1" width="1" height="1" fill="#a00000"/><rect x="15" y="1" width="1" height="1" fill="#a00000"/><rect x="10" y="3" width="1" height="1" fill="#a00000"/><rect x="13" y="3" width="1" height="1" fill="#a00000"/><rect x="17" y="5" width="1" height="1" fill="#a00000"/><rect x="6" y="3" width="1" height="1" fill="#a00000"/><rect x="1" y="6" width="6" height="2" fill="#a00000"/><rect x="5" y="9" width="5" height="2" fill="#008000"/><rect x="8" y="12" width="6" height="2" fill="#0000ff"/><rect x="6" y="4" width="2" height="1" fill="#000"/><rect x="7" y="5" width="2" height="1" fill="#000"/><rect x="8" y="6" width="2" height="1" fill="#000"/><rect x="9" y="7" width="2" height="1" fill="#000"/><rect x="10" y="8" width="2" height="1" fill="#000"/><rect x="11" y="9" width="2" height="1" fill="#000"/><rect x="12" y="10" width="2" height="1" fill="#000"/><rect x="13" y="11" width="2" height="1" fill="#000"/><rect x="14" y="12" width="2" height="1" fill="#000"/><rect x="15" y="13" width="2" height="1" fill="#000"/><rect x="16" y="14" width="2" height="1" fill="#000"/><rect x="7" y="5" width="1" height="1" fill="#ff0"/></svg>
<svg style="left:627px;top:84px" width="5" height="3" viewBox="0 0 5 3"><path d="M0 0H5L2.5 3Z" fill="#000"/></svg>
<svg style="left:660px;top:0px" width="110" height="100" viewBox="0 0 110 100"><defs><pattern id="pp" width="3" height="3" patternUnits="userSpaceOnUse"><rect width="3" height="3" fill="#eae9c2"/><rect x="0" y="2" width="3" height="1" fill="#d8d6b0"/><rect x="1" y="0" width="1" height="1" fill="#f6f6dc"/></pattern></defs><path d="M58 28L97 24L90 43L83 65L73 83L64 94L40 89L4 81Q16 72 26 64Q34 52 39 40Q48 31 58 28Z" fill="url(#pp)"/><path d="M62 56Q72 58 80 56M55 70Q66 74 76 70M60 63L72 66M50 78Q60 80 70 78" stroke="#bcbb9a" stroke-width="3" fill="none" opacity="0.6"/><path d="M16 80L40 56" stroke="#d8a0a0" stroke-width="0.8" opacity="0.7"/><path d="M32 28L32 18Q33 8.5 42.5 8.5Q52 8.5 52.5 18L52.5 27" fill="none" stroke="#70709c" stroke-width="3.2"/><path d="M32 28L32 18Q33 8.5 42.5 8.5Q52 8.5 52.5 18L52.5 27" fill="none" stroke="#c8c8e0" stroke-width="1.2"/><path d="M31.5 37L35.5 72Q37 84.5 45.5 84.5Q55 84 57 72L59 44" fill="none" stroke="#64649a" stroke-width="3.2"/><path d="M31.5 37L35.5 72Q37 84.5 45.5 84.5Q55 84 57 72L59 44" fill="none" stroke="#b4b4d4" stroke-width="1.1"/><path d="M37 44L40.5 63Q42 68.5 46 68.5Q50.5 68 51 62L49.5 40" fill="none" stroke="#64649a" stroke-width="3"/><path d="M37 44L40.5 63Q42 68.5 46 68.5Q50.5 68 51 62L49.5 40" fill="none" stroke="#b4b4d4" stroke-width="1"/><ellipse cx="31.2" cy="30" rx="7" ry="5.8" fill="#ececec" stroke="#8c8cb0" stroke-width="1.2"/><ellipse cx="32" cy="30.5" rx="3.3" ry="2.8" fill="#000"/><ellipse cx="48.8" cy="35.2" rx="7.5" ry="6" fill="#ececec" stroke="#8c8cb0" stroke-width="1.2"/><ellipse cx="49" cy="35.5" rx="3.3" ry="2.8" fill="#000"/><path d="M28 21.8Q33 18.5 38 21" fill="none" stroke="#000" stroke-width="2.2"/><path d="M50 26Q56 26.5 58 32" fill="none" stroke="#000" stroke-width="2.2"/></svg>
<div style="left:0px;top:96px;width:108px;height:19px;background:#c6c3c6;border-top:1px solid #848284;border-left:1px solid #848284;border-right:1px solid #fff;border-bottom:1px solid #fff;"></div>
<div style="left:145px;top:95px;width:879px;height:20px;background:#fff;border-top:1px solid #848284;border-left:1px solid #848284;border-right:1px solid #fff;border-bottom:1px solid #fff;"></div>
<div class="t" style="left:150px;top:99px;letter-spacing:-0.12px">Weekly Progress Reporting</div>
<div style="left:0px;top:115px;width:1024px;height:1px;background:#c6c3c6"></div>
<div style="left:0px;top:116px;width:1024px;height:1px;background:#848284"></div>
<div style="left:1px;top:117px;width:62px;height:630px;background:#848284;border-top:1px solid #000;border-left:1px solid #000"></div>
<div style="left:64px;top:117px;width:1px;height:631px;background:#fff"></div>
<svg style="left:15px;top:132px" width="30" height="24" viewBox="0 0 30 24" shape-rendering="crispEdges"><rect x="0" y="0" width="30" height="24" fill="#000"/><rect x="1" y="1" width="28" height="22" fill="#fff"/><rect x="2" y="3" width="26" height="18" fill="#848284"/><rect x="3" y="4" width="2" height="1" fill="#c6c3c6"/><rect x="3" y="6" width="2" height="2" fill="#fff"/><rect x="3" y="9" width="2" height="2" fill="#fff"/><rect x="3" y="12" width="2" height="2" fill="#fff"/><rect x="3" y="15" width="2" height="2" fill="#fff"/><rect x="3" y="18" width="2" height="2" fill="#fff"/><rect x="6" y="4" width="3" height="1" fill="#c6c3c6"/><rect x="6" y="6" width="3" height="2" fill="#fff"/><rect x="6" y="9" width="3" height="2" fill="#fff"/><rect x="6" y="12" width="3" height="2" fill="#fff"/><rect x="6" y="15" width="3" height="2" fill="#fff"/><rect x="6" y="18" width="3" height="2" fill="#fff"/><rect x="10" y="4" width="3" height="1" fill="#c6c3c6"/><rect x="10" y="6" width="3" height="2" fill="#fff"/><rect x="10" y="9" width="3" height="2" fill="#fff"/><rect x="10" y="12" width="3" height="2" fill="#fff"/><rect x="10" y="15" width="3" height="2" fill="#fff"/><rect x="10" y="18" width="3" height="2" fill="#fff"/><rect x="14" y="4" width="3" height="1" fill="#c6c3c6"/><rect x="14" y="6" width="3" height="2" fill="#fff"/><rect x="14" y="9" width="3" height="2" fill="#fff"/><rect x="14" y="12" width="3" height="2" fill="#fff"/><rect x="14" y="15" width="3" height="2" fill="#fff"/><rect x="14" y="18" width="3" height="2" fill="#fff"/><rect x="18" y="4" width="3" height="1" fill="#c6c3c6"/><rect x="18" y="6" width="3" height="2" fill="#fff"/><rect x="18" y="9" width="3" height="2" fill="#fff"/><rect x="18" y="12" width="3" height="2" fill="#fff"/><rect x="18" y="15" width="3" height="2" fill="#fff"/><rect x="18" y="18" width="3" height="2" fill="#fff"/><rect x="22" y="4" width="2" height="1" fill="#c6c3c6"/><rect x="22" y="6" width="2" height="2" fill="#fff"/><rect x="22" y="9" width="2" height="2" fill="#fff"/><rect x="22" y="12" width="2" height="2" fill="#fff"/><rect x="22" y="15" width="2" height="2" fill="#fff"/><rect x="22" y="18" width="2" height="2" fill="#fff"/><rect x="25" y="4" width="2" height="1" fill="#c6c3c6"/><rect x="25" y="6" width="2" height="2" fill="#fff"/><rect x="25" y="9" width="2" height="2" fill="#fff"/><rect x="25" y="12" width="2" height="2" fill="#fff"/><rect x="25" y="15" width="2" height="2" fill="#fff"/><rect x="25" y="18" width="2" height="2" fill="#fff"/><rect x="5.5" y="8.5" width="8" height="2" fill="#fff" stroke="#00f"/><rect x="17.5" y="11.5" width="4" height="2" fill="#fff" stroke="#00f"/><rect x="9.5" y="14.5" width="4" height="2" fill="#fff" stroke="#00f"/></svg>
<div class="c" style="left:2px;top:164px;width:61px;color:#fff;line-height:13px;font-size:11px">Calendar</div>
<div style="left:11px;top:185px;width:40px;height:36px;border-top:1px solid #000;border-left:1px solid #000;border-right:1px solid #fff;border-bottom:1px solid #fff" class="dith2"></div>
<svg style="left:15px;top:190px" width="30" height="24" viewBox="0 0 30 24" shape-rendering="crispEdges"><rect x="0" y="0" width="30" height="24" fill="#000"/><rect x="1" y="1" width="28" height="22" fill="#fff"/><rect x="2" y="2" width="7" height="1" fill="#800080"/><rect x="24" y="2" width="4" height="1" fill="#800080"/><rect x="2" y="4" width="26" height="18" fill="#c6c3c6"/><rect x="3" y="5" width="24" height="16" fill="#fff"/><rect x="5" y="5" width="1" height="16" fill="#c6c3c6"/><rect x="8" y="5" width="1" height="16" fill="#c6c3c6"/><rect x="11" y="5" width="1" height="16" fill="#c6c3c6"/><rect x="14" y="5" width="1" height="16" fill="#c6c3c6"/><rect x="17" y="5" width="1" height="16" fill="#c6c3c6"/><rect x="20" y="5" width="1" height="16" fill="#c6c3c6"/><rect x="23" y="5" width="1" height="16" fill="#c6c3c6"/><rect x="26" y="5" width="1" height="16" fill="#c6c3c6"/><rect x="3" y="5" width="24" height="1" fill="#000"/><path d="M3 5H7L5 8Z M23 5H27L25 8Z" fill="#000"/><rect x="4" y="7" width="6" height="3" fill="#008080"/><rect x="10" y="11" width="11" height="3" fill="#008080"/><rect x="21" y="15" width="5" height="3" fill="#008080"/></svg>
<div class="c" style="left:2px;top:223px;width:61px;color:#fff;line-height:13px;font-size:11px">Gantt<br>Chart</div>
<svg style="left:15px;top:261px" width="30" height="24" viewBox="0 0 30 24" shape-rendering="crispEdges"><rect x="0" y="0" width="30" height="24" fill="#000"/><rect x="1" y="1" width="28" height="22" fill="#fff"/><g fill="#fff" stroke="#000"><rect x="3.5" y="2.5" width="7" height="4"/><rect x="18.5" y="2.5" width="7" height="4"/><rect x="18.5" y="9.5" width="7" height="4"/><rect x="18.5" y="16.5" width="7" height="4"/></g><rect x="11" y="4" width="7" height="1" fill="#000"/><rect x="14" y="4" width="1" height="15" fill="#000"/><rect x="14" y="11" width="4" height="1" fill="#000"/><rect x="14" y="18" width="4" height="1" fill="#000"/><rect x="4" y="7" width="8" height="1" fill="#808080"/><rect x="19" y="7" width="8" height="1" fill="#808080"/><rect x="19" y="14" width="8" height="1" fill="#808080"/><rect x="19" y="21" width="8" height="1" fill="#808080"/></svg>
<div class="c" style="left:2px;top:293px;width:61px;color:#fff;line-height:13px;font-size:11px">Network<br>Diagram</div>
<svg style="left:15px;top:332px" width="34" height="28" viewBox="0 0 34 28"><rect x="0" y="0" width="30" height="24" fill="#000"/><rect x="1" y="1" width="28" height="22" fill="#fff"/><rect x="3" y="3" width="23" height="18" fill="#848284"/><rect x="4" y="4" width="4" height="1" fill="#c6c3c6"/><rect x="4" y="6" width="4" height="2" fill="#fff"/><rect x="4" y="9" width="4" height="2" fill="#fff"/><rect x="4" y="12" width="4" height="2" fill="#fff"/><rect x="4" y="15" width="4" height="2" fill="#fff"/><rect x="4" y="18" width="4" height="2" fill="#fff"/><rect x="9" y="4" width="2" height="1" fill="#c6c3c6"/><rect x="9" y="6" width="2" height="2" fill="#fff"/><rect x="9" y="9" width="2" height="2" fill="#fff"/><rect x="9" y="12" width="2" height="2" fill="#fff"/><rect x="9" y="15" width="2" height="2" fill="#fff"/><rect x="9" y="18" width="2" height="2" fill="#fff"/><rect x="12" y="4" width="4" height="1" fill="#c6c3c6"/><rect x="17" y="4" width="5" height="1" fill="#c6c3c6"/><rect x="23" y="4" width="2" height="1" fill="#c6c3c6"/><rect x="12" y="6" width="13" height="14" fill="#fff"/><rect x="12" y="6" width="4" height="2" fill="#ff0"/><rect x="12" y="9" width="4" height="2" fill="#ff0"/><rect x="12" y="12" width="4" height="2" fill="#ff0"/><rect x="12" y="15" width="4" height="2" fill="#ff0"/><rect x="12" y="18" width="4" height="2" fill="#ff0"/><rect x="18" y="6" width="4" height="2" fill="#ff0"/><rect x="18" y="9" width="4" height="2" fill="#ff0"/><rect x="18" y="12" width="4" height="2" fill="#ff0"/><rect x="18" y="15" width="4" height="2" fill="#ff0"/><rect x="18" y="18" width="4" height="2" fill="#ff0"/><rect x="23" y="6" width="2" height="2" fill="#ff0"/><rect x="23" y="9" width="2" height="2" fill="#ff0"/><rect x="23" y="12" width="2" height="2" fill="#ff0"/><rect x="23" y="15" width="2" height="2" fill="#ff0"/><rect x="23" y="18" width="2" height="2" fill="#ff0"/><rect x="16" y="6" width="1" height="14" fill="#c6c3c6"/><rect x="22" y="6" width="1" height="14" fill="#c6c3c6"/><path d="M20.5 13.5H32.5V26.5H20.5Z" fill="#fff" stroke="#000"/><rect x="24" y="12" width="5" height="2" fill="#000"/><path d="M23 20L25 23L30 16" stroke="#800000" stroke-width="1.6" fill="none"/></svg>
<div class="c" style="left:2px;top:364px;width:61px;color:#fff;line-height:13px;font-size:11px">Task<br>Usage</div>
<svg style="left:15px;top:403px" width="30" height="24" viewBox="0 0 30 24" shape-rendering="crispEdges"><rect x="0" y="0" width="30" height="24" fill="#000"/><rect x="1" y="1" width="28" height="22" fill="#fff"/><rect x="2" y="2" width="7" height="1" fill="#800080"/><rect x="24" y="2" width="4" height="1" fill="#800080"/><rect x="2" y="4" width="26" height="18" fill="#c6c3c6"/><rect x="3" y="5" width="24" height="16" fill="#fff"/><rect x="5" y="5" width="1" height="16" fill="#c6c3c6"/><rect x="8" y="5" width="1" height="16" fill="#c6c3c6"/><rect x="11" y="5" width="1" height="16" fill="#c6c3c6"/><rect x="14" y="5" width="1" height="16" fill="#c6c3c6"/><rect x="17" y="5" width="1" height="16" fill="#c6c3c6"/><rect x="20" y="5" width="1" height="16" fill="#c6c3c6"/><rect x="23" y="5" width="1" height="16" fill="#c6c3c6"/><rect x="26" y="5" width="1" height="16" fill="#c6c3c6"/><rect x="3" y="5" width="24" height="1" fill="#000"/><path d="M3 5H7L5 8Z M23 5H27L25 8Z" fill="#000"/><rect x="4" y="7" width="6" height="3" fill="#008080"/><rect x="10" y="11" width="11" height="3" fill="#008080"/><rect x="21" y="15" width="5" height="3" fill="#008080"/></svg>
<div class="c" style="left:2px;top:435px;width:61px;color:#fff;line-height:13px;font-size:11px">Tracking<br>Gantt</div>
<svg style="left:15px;top:474px" width="34" height="28" viewBox="0 0 34 28" shape-rendering="crispEdges"><rect x="0" y="0" width="30" height="24" fill="#000"/><rect x="1" y="1" width="28" height="22" fill="#fff"/><rect x="1" y="1" width="28" height="2" fill="#848284"/><rect x="1" y="21" width="28" height="2" fill="#848284"/><rect x="2" y="1" width="2" height="1" fill="#c6c3c6"/><rect x="2" y="21" width="2" height="1" fill="#c6c3c6"/><rect x="5" y="1" width="2" height="1" fill="#c6c3c6"/><rect x="5" y="21" width="2" height="1" fill="#c6c3c6"/><rect x="8" y="1" width="2" height="1" fill="#c6c3c6"/><rect x="8" y="21" width="2" height="1" fill="#c6c3c6"/><rect x="11" y="1" width="2" height="1" fill="#c6c3c6"/><rect x="11" y="21" width="2" height="1" fill="#c6c3c6"/><rect x="14" y="1" width="2" height="1" fill="#c6c3c6"/><rect x="14" y="21" width="2" height="1" fill="#c6c3c6"/><rect x="17" y="1" width="2" height="1" fill="#c6c3c6"/><rect x="17" y="21" width="2" height="1" fill="#c6c3c6"/><rect x="20" y="1" width="2" height="1" fill="#c6c3c6"/><rect x="20" y="21" width="2" height="1" fill="#c6c3c6"/><rect x="23" y="1" width="2" height="1" fill="#c6c3c6"/><rect x="23" y="21" width="2" height="1" fill="#c6c3c6"/><rect x="26" y="1" width="2" height="1" fill="#c6c3c6"/><rect x="26" y="21" width="2" height="1" fill="#c6c3c6"/><rect x="2" y="12" width="2" height="9" fill="#00f"/><rect x="5" y="14" width="2" height="7" fill="#00f"/><rect x="8" y="14" width="2" height="7" fill="#00f"/><rect x="11" y="11" width="2" height="10" fill="#00f"/><rect x="14" y="11" width="2" height="10" fill="#00f"/><rect x="14" y="7" width="2" height="4" fill="#f00"/><rect x="17" y="11" width="2" height="10" fill="#00f"/><rect x="17" y="5" width="2" height="6" fill="#f00"/><rect x="20" y="11" width="2" height="10" fill="#00f"/><rect x="20" y="9" width="2" height="2" fill="#f00"/><rect x="23" y="13" width="2" height="8" fill="#00f"/><rect x="23" y="16" width="1" height="1" fill="#000"/><rect x="24" y="16" width="1" height="1" fill="#000"/><rect x="25" y="16" width="1" height="1" fill="#000"/><rect x="26" y="16" width="1" height="1" fill="#000"/><rect x="27" y="16" width="1" height="1" fill="#000"/><rect x="29" y="16" width="1" height="1" fill="#c6c3c6"/><rect x="30" y="16" width="1" height="1" fill="#000"/><rect x="22" y="17" width="1" height="1" fill="#000"/><rect x="23" y="17" width="1" height="1" fill="#c6c3c6"/><rect x="24" y="17" width="1" height="1" fill="#c6c3c6"/><rect x="25" y="17" width="1" height="1" fill="#fff"/><rect x="26" y="17" width="1" height="1" fill="#fff"/><rect x="27" y="17" width="1" height="1" fill="#fff"/><rect x="28" y="17" width="1" height="1" fill="#000"/><rect x="29" y="17" width="1" height="1" fill="#c6c3c6"/><rect x="30" y="17" width="1" height="1" fill="#c6c3c6"/><rect x="31" y="17" width="1" height="1" fill="#000"/><rect x="21" y="18" width="1" height="1" fill="#000"/><rect x="22" y="18" width="1" height="1" fill="#c6c3c6"/><rect x="23" y="18" width="1" height="1" fill="#000"/><rect x="24" y="18" width="1" height="1" fill="#fff"/><rect x="25" y="18" width="1" height="1" fill="#fff"/><rect x="26" y="18" width="1" height="1" fill="#fff"/><rect x="27" y="18" width="1" height="1" fill="#fff"/><rect x="28" y="18" width="1" height="1" fill="#000"/><rect x="29" y="18" width="1" height="1" fill="#000"/><rect x="30" y="18" width="1" height="1" fill="#c6c3c6"/><rect x="31" y="18" width="1" height="1" fill="#c6c3c6"/><rect x="21" y="19" width="1" height="1" fill="#000"/><rect x="22" y="19" width="1" height="1" fill="#c6c3c6"/><rect x="23" y="19" width="1" height="1" fill="#fff"/><rect x="24" y="19" width="1" height="1" fill="#fff"/><rect x="25" y="19" width="1" height="1" fill="#fff"/><rect x="26" y="19" width="1" height="1" fill="#fff"/><rect x="27" y="19" width="1" height="1" fill="#000"/><rect x="28" y="19" width="1" height="1" fill="#000"/><rect x="29" y="19" width="1" height="1" fill="#c6c3c6"/><rect x="30" y="19" width="1" height="1" fill="#000"/><rect x="31" y="19" width="1" height="1" fill="#c6c3c6"/><rect x="21" y="20" width="1" height="1" fill="#000"/><rect x="22" y="20" width="1" height="1" fill="#000"/><rect x="23" y="20" width="1" height="1" fill="#fff"/><rect x="24" y="20" width="1" height="1" fill="#fff"/><rect x="25" y="20" width="1" height="1" fill="#fff"/><rect x="26" y="20" width="1" height="1" fill="#fff"/><rect x="27" y="20" width="1" height="1" fill="#fff"/><rect x="28" y="20" width="1" height="1" fill="#fff"/><rect x="29" y="20" width="1" height="1" fill="#000"/><rect x="30" y="20" width="1" height="1" fill="#c6c3c6"/><rect x="31" y="20" width="1" height="1" fill="#000"/><rect x="21" y="21" width="1" height="1" fill="#000"/><rect x="22" y="21" width="1" height="1" fill="#c6c3c6"/><rect x="23" y="21" width="1" height="1" fill="#fff"/><rect x="24" y="21" width="1" height="1" fill="#fff"/><rect x="25" y="21" width="1" height="1" fill="#fff"/><rect x="26" y="21" width="1" height="1" fill="#fff"/><rect x="27" y="21" width="1" height="1" fill="#fff"/><rect x="28" y="21" width="1" height="1" fill="#000"/><rect x="29" y="21" width="1" height="1" fill="#fff"/><rect x="30" y="21" width="1" height="1" fill="#000"/><rect x="31" y="21" width="1" height="1" fill="#c6c3c6"/><rect x="21" y="22" width="1" height="1" fill="#000"/><rect x="22" y="22" width="1" height="1" fill="#fff"/><rect x="23" y="22" width="1" height="1" fill="#fff"/><rect x="24" y="22" width="1" height="1" fill="#fff"/><rect x="25" y="22" width="1" height="1" fill="#fff"/><rect x="26" y="22" width="1" height="1" fill="#fff"/><rect x="27" y="22" width="1" height="1" fill="#fff"/><rect x="28" y="22" width="1" height="1" fill="#000"/><rect x="29" y="22" width="1" height="1" fill="#fff"/><rect x="30" y="22" width="1" height="1" fill="#000"/><rect x="31" y="22" width="1" height="1" fill="#fff"/><rect x="22" y="23" width="1" height="1" fill="#000"/><rect x="23" y="23" width="1" height="1" fill="#fff"/><rect x="24" y="23" width="1" height="1" fill="#fff"/><rect x="25" y="23" width="1" height="1" fill="#fff"/><rect x="26" y="23" width="1" height="1" fill="#fff"/><rect x="27" y="23" width="1" height="1" fill="#000"/><rect x="28" y="23" width="1" height="1" fill="#000"/><rect x="29" y="23" width="1" height="1" fill="#800080"/><rect x="30" y="23" width="1" height="1" fill="#000"/><rect x="31" y="23" width="1" height="1" fill="#800080"/><rect x="23" y="24" width="1" height="1" fill="#000"/><rect x="24" y="24" width="1" height="1" fill="#fff"/><rect x="25" y="24" width="1" height="1" fill="#fff"/><rect x="26" y="24" width="1" height="1" fill="#000"/><rect x="27" y="24" width="1" height="1" fill="#000"/><rect x="28" y="24" width="1" height="1" fill="#800080"/><rect x="29" y="24" width="1" height="1" fill="#000"/><rect x="30" y="24" width="1" height="1" fill="#800080"/><rect x="31" y="24" width="1" height="1" fill="#000"/><rect x="24" y="25" width="1" height="1" fill="#fff"/><rect x="25" y="25" width="1" height="1" fill="#fff"/><rect x="26" y="25" width="1" height="1" fill="#fff"/></svg>
<div class="c" style="left:2px;top:506px;width:61px;color:#fff;line-height:13px;font-size:11px">Resource<br>Graph</div>
<svg style="left:15px;top:545px" width="34" height="29" viewBox="0 0 34 29" shape-rendering="crispEdges"><rect x="0" y="0" width="30" height="24" fill="#000"/><rect x="1" y="1" width="28" height="22" fill="#fff"/><rect x="2" y="3" width="26" height="18" fill="#848284"/><rect x="3" y="4" width="1" height="1" fill="#c6c3c6"/><rect x="3" y="6" width="1" height="2" fill="#fff"/><rect x="3" y="9" width="1" height="2" fill="#fff"/><rect x="3" y="12" width="1" height="2" fill="#fff"/><rect x="3" y="15" width="1" height="2" fill="#fff"/><rect x="3" y="18" width="1" height="2" fill="#fff"/><rect x="6" y="4" width="4" height="1" fill="#c6c3c6"/><rect x="6" y="6" width="4" height="2" fill="#fff"/><rect x="6" y="9" width="4" height="2" fill="#fff"/><rect x="6" y="12" width="4" height="2" fill="#fff"/><rect x="6" y="15" width="4" height="2" fill="#fff"/><rect x="6" y="18" width="4" height="2" fill="#fff"/><rect x="11" y="4" width="2" height="1" fill="#c6c3c6"/><rect x="11" y="6" width="2" height="2" fill="#fff"/><rect x="11" y="9" width="2" height="2" fill="#fff"/><rect x="11" y="12" width="2" height="2" fill="#fff"/><rect x="11" y="15" width="2" height="2" fill="#fff"/><rect x="11" y="18" width="2" height="2" fill="#fff"/><rect x="14" y="4" width="4" height="1" fill="#c6c3c6"/><rect x="14" y="6" width="4" height="2" fill="#fff"/><rect x="14" y="9" width="4" height="2" fill="#fff"/><rect x="14" y="12" width="4" height="2" fill="#fff"/><rect x="14" y="15" width="4" height="2" fill="#fff"/><rect x="14" y="18" width="4" height="2" fill="#fff"/><rect x="19" y="4" width="5" height="1" fill="#c6c3c6"/><rect x="19" y="6" width="5" height="2" fill="#fff"/><rect x="19" y="9" width="5" height="2" fill="#fff"/><rect x="19" y="12" width="5" height="2" fill="#fff"/><rect x="19" y="15" width="5" height="2" fill="#fff"/><rect x="19" y="18" width="5" height="2" fill="#fff"/><rect x="25" y="4" width="2" height="1" fill="#c6c3c6"/><rect x="25" y="6" width="2" height="2" fill="#fff"/><rect x="25" y="9" width="2" height="2" fill="#fff"/><rect x="25" y="12" width="2" height="2" fill="#fff"/><rect x="25" y="15" width="2" height="2" fill="#fff"/><rect x="25" y="18" width="2" height="2" fill="#fff"/><rect x="23" y="16" width="1" height="1" fill="#000"/><rect x="24" y="16" width="1" height="1" fill="#000"/><rect x="25" y="16" width="1" height="1" fill="#000"/><rect x="26" y="16" width="1" height="1" fill="#000"/><rect x="27" y="16" width="1" height="1" fill="#000"/><rect x="29" y="16" width="1" height="1" fill="#c6c3c6"/><rect x="30" y="16" width="1" height="1" fill="#000"/><rect x="22" y="17" width="1" height="1" fill="#000"/><rect x="23" y="17" width="1" height="1" fill="#c6c3c6"/><rect x="24" y="17" width="1" height="1" fill="#c6c3c6"/><rect x="25" y="17" width="1" height="1" fill="#fff"/><rect x="26" y="17" width="1" height="1" fill="#fff"/><rect x="27" y="17" width="1" height="1" fill="#fff"/><rect x="28" y="17" width="1" height="1" fill="#000"/><rect x="29" y="17" width="1" height="1" fill="#c6c3c6"/><rect x="30" y="17" width="1" height="1" fill="#c6c3c6"/><rect x="31" y="17" width="1" height="1" fill="#000"/><rect x="21" y="18" width="1" height="1" fill="#000"/><rect x="22" y="18" width="1" height="1" fill="#c6c3c6"/><rect x="23" y="18" width="1" height="1" fill="#000"/><rect x="24" y="18" width="1" height="1" fill="#fff"/><rect x="25" y="18" width="1" height="1" fill="#fff"/><rect x="26" y="18" width="1" height="1" fill="#fff"/><rect x="27" y="18" width="1" height="1" fill="#fff"/><rect x="28" y="18" width="1" height="1" fill="#000"/><rect x="29" y="18" width="1" height="1" fill="#000"/><rect x="30" y="18" width="1" height="1" fill="#c6c3c6"/><rect x="31" y="18" width="1" height="1" fill="#c6c3c6"/><rect x="21" y="19" width="1" height="1" fill="#000"/><rect x="22" y="19" width="1" height="1" fill="#c6c3c6"/><rect x="23" y="19" width="1" height="1" fill="#fff"/><rect x="24" y="19" width="1" height="1" fill="#fff"/><rect x="25" y="19" width="1" height="1" fill="#fff"/><rect x="26" y="19" width="1" height="1" fill="#fff"/><rect x="27" y="19" width="1" height="1" fill="#000"/><rect x="28" y="19" width="1" height="1" fill="#000"/><rect x="29" y="19" width="1" height="1" fill="#c6c3c6"/><rect x="30" y="19" width="1" height="1" fill="#000"/><rect x="31" y="19" width="1" height="1" fill="#c6c3c6"/><rect x="21" y="20" width="1" height="1" fill="#000"/><rect x="22" y="20" width="1" height="1" fill="#000"/><rect x="23" y="20" width="1" height="1" fill="#fff"/><rect x="24" y="20" width="1" height="1" fill="#fff"/><rect x="25" y="20" width="1" height="1" fill="#fff"/><rect x="26" y="20" width="1" height="1" fill="#fff"/><rect x="27" y="20" width="1" height="1" fill="#fff"/><rect x="28" y="20" width="1" height="1" fill="#fff"/><rect x="29" y="20" width="1" height="1" fill="#000"/><rect x="30" y="20" width="1" height="1" fill="#c6c3c6"/><rect x="31" y="20" width="1" height="1" fill="#000"/><rect x="21" y="21" width="1" height="1" fill="#000"/><rect x="22" y="21" width="1" height="1" fill="#c6c3c6"/><rect x="23" y="21" width="1" height="1" fill="#fff"/><rect x="24" y="21" width="1" height="1" fill="#fff"/><rect x="25" y="21" width="1" height="1" fill="#fff"/><rect x="26" y="21" width="1" height="1" fill="#fff"/><rect x="27" y="21" width="1" height="1" fill="#fff"/><rect x="28" y="21" width="1" height="1" fill="#000"/><rect x="29" y="21" width="1" height="1" fill="#fff"/><rect x="30" y="21" width="1" height="1" fill="#000"/><rect x="31" y="21" width="1" height="1" fill="#c6c3c6"/><rect x="21" y="22" width="1" height="1" fill="#000"/><rect x="22" y="22" width="1" height="1" fill="#fff"/><rect x="23" y="22" width="1" height="1" fill="#fff"/><rect x="24" y="22" width="1" height="1" fill="#fff"/><rect x="25" y="22" width="1" height="1" fill="#fff"/><rect x="26" y="22" width="1" height="1" fill="#fff"/><rect x="27" y="22" width="1" height="1" fill="#fff"/><rect x="28" y="22" width="1" height="1" fill="#000"/><rect x="29" y="22" width="1" height="1" fill="#fff"/><rect x="30" y="22" width="1" height="1" fill="#000"/><rect x="31" y="22" width="1" height="1" fill="#fff"/><rect x="22" y="23" width="1" height="1" fill="#000"/><rect x="23" y="23" width="1" height="1" fill="#fff"/><rect x="24" y="23" width="1" height="1" fill="#fff"/><rect x="25" y="23" width="1" height="1" fill="#fff"/><rect x="26" y="23" width="1" height="1" fill="#fff"/><rect x="27" y="23" width="1" height="1" fill="#000"/><rect x="28" y="23" width="1" height="1" fill="#000"/><rect x="29" y="23" width="1" height="1" fill="#800080"/><rect x="30" y="23" width="1" height="1" fill="#000"/><rect x="31" y="23" width="1" height="1" fill="#800080"/><rect x="23" y="24" width="1" height="1" fill="#000"/><rect x="24" y="24" width="1" height="1" fill="#fff"/><rect x="25" y="24" width="1" height="1" fill="#fff"/><rect x="26" y="24" width="1" height="1" fill="#000"/><rect x="27" y="24" width="1" height="1" fill="#000"/><rect x="28" y="24" width="1" height="1" fill="#800080"/><rect x="29" y="24" width="1" height="1" fill="#000"/><rect x="30" y="24" width="1" height="1" fill="#800080"/><rect x="31" y="24" width="1" height="1" fill="#000"/><rect x="24" y="25" width="1" height="1" fill="#fff"/><rect x="25" y="25" width="1" height="1" fill="#fff"/><rect x="26" y="25" width="1" height="1" fill="#fff"/></svg>
<div class="c" style="left:2px;top:577px;width:61px;color:#fff;line-height:13px;font-size:11px">Resource<br>Sheet</div>
<svg style="left:15px;top:616px" width="34" height="29" viewBox="0 0 34 29" shape-rendering="crispEdges"><rect x="0" y="0" width="30" height="24" fill="#000"/><rect x="1" y="1" width="28" height="22" fill="#fff"/><rect x="3" y="3" width="23" height="18" fill="#848284"/><rect x="4" y="4" width="4" height="1" fill="#c6c3c6"/><rect x="4" y="6" width="4" height="2" fill="#fff"/><rect x="4" y="9" width="4" height="2" fill="#fff"/><rect x="4" y="12" width="4" height="2" fill="#fff"/><rect x="4" y="15" width="4" height="2" fill="#fff"/><rect x="4" y="18" width="4" height="2" fill="#fff"/><rect x="9" y="4" width="2" height="1" fill="#c6c3c6"/><rect x="9" y="6" width="2" height="2" fill="#fff"/><rect x="9" y="9" width="2" height="2" fill="#fff"/><rect x="9" y="12" width="2" height="2" fill="#fff"/><rect x="9" y="15" width="2" height="2" fill="#fff"/><rect x="9" y="18" width="2" height="2" fill="#fff"/><rect x="12" y="4" width="4" height="1" fill="#c6c3c6"/><rect x="17" y="4" width="5" height="1" fill="#c6c3c6"/><rect x="23" y="4" width="2" height="1" fill="#c6c3c6"/><rect x="12" y="6" width="13" height="14" fill="#fff"/><rect x="12" y="6" width="4" height="2" fill="#ff0"/><rect x="12" y="9" width="4" height="2" fill="#ff0"/><rect x="12" y="12" width="4" height="2" fill="#ff0"/><rect x="12" y="15" width="4" height="2" fill="#ff0"/><rect x="12" y="18" width="4" height="2" fill="#ff0"/><rect x="18" y="6" width="4" height="2" fill="#ff0"/><rect x="18" y="9" width="4" height="2" fill="#ff0"/><rect x="18" y="12" width="4" height="2" fill="#ff0"/><rect x="18" y="15" width="4" height="2" fill="#ff0"/><rect x="18" y="18" width="4" height="2" fill="#ff0"/><rect x="23" y="6" width="2" height="2" fill="#ff0"/><rect x="23" y="9" width="2" height="2" fill="#ff0"/><rect x="23" y="12" width="2" height="2" fill="#ff0"/><rect x="23" y="15" width="2" height="2" fill="#ff0"/><rect x="23" y="18" width="2" height="2" fill="#ff0"/><rect x="16" y="6" width="1" height="14" fill="#c6c3c6"/><rect x="22" y="6" width="1" height="14" fill="#c6c3c6"/><rect x="23" y="16" width="1" height="1" fill="#000"/><rect x="24" y="16" width="1" height="1" fill="#000"/><rect x="25" y="16" width="1" height="1" fill="#000"/><rect x="26" y="16" width="1" height="1" fill="#000"/><rect x="27" y="16" width="1" height="1" fill="#000"/><rect x="29" y="16" width="1" height="1" fill="#c6c3c6"/><rect x="30" y="16" width="1" height="1" fill="#000"/><rect x="22" y="17" width="1" height="1" fill="#000"/><rect x="23" y="17" width="1" height="1" fill="#c6c3c6"/><rect x="24" y="17" width="1" height="1" fill="#c6c3c6"/><rect x="25" y="17" width="1" height="1" fill="#fff"/><rect x="26" y="17" width="1" height="1" fill="#fff"/><rect x="27" y="17" width="1" height="1" fill="#fff"/><rect x="28" y="17" width="1" height="1" fill="#000"/><rect x="29" y="17" width="1" height="1" fill="#c6c3c6"/><rect x="30" y="17" width="1" height="1" fill="#c6c3c6"/><rect x="31" y="17" width="1" height="1" fill="#000"/><rect x="21" y="18" width="1" height="1" fill="#000"/><rect x="22" y="18" width="1" height="1" fill="#c6c3c6"/><rect x="23" y="18" width="1" height="1" fill="#000"/><rect x="24" y="18" width="1" height="1" fill="#fff"/><rect x="25" y="18" width="1" height="1" fill="#fff"/><rect x="26" y="18" width="1" height="1" fill="#fff"/><rect x="27" y="18" width="1" height="1" fill="#fff"/><rect x="28" y="18" width="1" height="1" fill="#000"/><rect x="29" y="18" width="1" height="1" fill="#000"/><rect x="30" y="18" width="1" height="1" fill="#c6c3c6"/><rect x="31" y="18" width="1" height="1" fill="#c6c3c6"/><rect x="21" y="19" width="1" height="1" fill="#000"/><rect x="22" y="19" width="1" height="1" fill="#c6c3c6"/><rect x="23" y="19" width="1" height="1" fill="#fff"/><rect x="24" y="19" width="1" height="1" fill="#fff"/><rect x="25" y="19" width="1" height="1" fill="#fff"/><rect x="26" y="19" width="1" height="1" fill="#fff"/><rect x="27" y="19" width="1" height="1" fill="#000"/><rect x="28" y="19" width="1" height="1" fill="#000"/><rect x="29" y="19" width="1" height="1" fill="#c6c3c6"/><rect x="30" y="19" width="1" height="1" fill="#000"/><rect x="31" y="19" width="1" height="1" fill="#c6c3c6"/><rect x="21" y="20" width="1" height="1" fill="#000"/><rect x="22" y="20" width="1" height="1" fill="#000"/><rect x="23" y="20" width="1" height="1" fill="#fff"/><rect x="24" y="20" width="1" height="1" fill="#fff"/><rect x="25" y="20" width="1" height="1" fill="#fff"/><rect x="26" y="20" width="1" height="1" fill="#fff"/><rect x="27" y="20" width="1" height="1" fill="#fff"/><rect x="28" y="20" width="1" height="1" fill="#fff"/><rect x="29" y="20" width="1" height="1" fill="#000"/><rect x="30" y="20" width="1" height="1" fill="#c6c3c6"/><rect x="31" y="20" width="1" height="1" fill="#000"/><rect x="21" y="21" width="1" height="1" fill="#000"/><rect x="22" y="21" width="1" height="1" fill="#c6c3c6"/><rect x="23" y="21" width="1" height="1" fill="#fff"/><rect x="24" y="21" width="1" height="1" fill="#fff"/><rect x="25" y="21" width="1" height="1" fill="#fff"/><rect x="26" y="21" width="1" height="1" fill="#fff"/><rect x="27" y="21" width="1" height="1" fill="#fff"/><rect x="28" y="21" width="1" height="1" fill="#000"/><rect x="29" y="21" width="1" height="1" fill="#fff"/><rect x="30" y="21" width="1" height="1" fill="#000"/><rect x="31" y="21" width="1" height="1" fill="#c6c3c6"/><rect x="21" y="22" width="1" height="1" fill="#000"/><rect x="22" y="22" width="1" height="1" fill="#fff"/><rect x="23" y="22" width="1" height="1" fill="#fff"/><rect x="24" y="22" width="1" height="1" fill="#fff"/><rect x="25" y="22" width="1" height="1" fill="#fff"/><rect x="26" y="22" width="1" height="1" fill="#fff"/><rect x="27" y="22" width="1" height="1" fill="#fff"/><rect x="28" y="22" width="1" height="1" fill="#000"/><rect x="29" y="22" width="1" height="1" fill="#fff"/><rect x="30" y="22" width="1" height="1" fill="#000"/><rect x="31" y="22" width="1" height="1" fill="#fff"/><rect x="22" y="23" width="1" height="1" fill="#000"/><rect x="23" y="23" width="1" height="1" fill="#fff"/><rect x="24" y="23" width="1" height="1" fill="#fff"/><rect x="25" y="23" width="1" height="1" fill="#fff"/><rect x="26" y="23" width="1" height="1" fill="#fff"/><rect x="27" y="23" width="1" height="1" fill="#000"/><rect x="28" y="23" width="1" height="1" fill="#000"/><rect x="29" y="23" width="1" height="1" fill="#800080"/><rect x="30" y="23" width="1" height="1" fill="#000"/><rect x="31" y="23" width="1" height="1" fill="#800080"/><rect x="23" y="24" width="1" height="1" fill="#000"/><rect x="24" y="24" width="1" height="1" fill="#fff"/><rect x="25" y="24" width="1" height="1" fill="#fff"/><rect x="26" y="24" width="1" height="1" fill="#000"/><rect x="27" y="24" width="1" height="1" fill="#000"/><rect x="28" y="24" width="1" height="1" fill="#800080"/><rect x="29" y="24" width="1" height="1" fill="#000"/><rect x="30" y="24" width="1" height="1" fill="#800080"/><rect x="31" y="24" width="1" height="1" fill="#000"/><rect x="24" y="25" width="1" height="1" fill="#fff"/><rect x="25" y="25" width="1" height="1" fill="#fff"/><rect x="26" y="25" width="1" height="1" fill="#fff"/></svg>
<div class="c" style="left:2px;top:648px;width:61px;color:#fff;line-height:13px;font-size:11px">Resource<br>Usage</div>
<svg style="left:15px;top:684px" width="32" height="29" viewBox="0 0 32 29" shape-rendering="crispEdges"><rect x="9" y="0" width="19" height="12" fill="#000"/><rect x="10" y="1" width="17" height="10" fill="#fff"/><rect x="11" y="2" width="15" height="9" fill="#848284"/><rect x="12" y="3" width="2" height="1" fill="#c6c3c6"/><rect x="15" y="3" width="1" height="1" fill="#c6c3c6"/><rect x="18" y="3" width="2" height="1" fill="#c6c3c6"/><rect x="21" y="3" width="2" height="1" fill="#c6c3c6"/><rect x="24" y="3" width="2" height="1" fill="#c6c3c6"/><rect x="18" y="5" width="2" height="6" fill="#ff0"/><rect x="21" y="5" width="2" height="6" fill="#ff0"/><rect x="12" y="5" width="2" height="1" fill="#fff"/><rect x="0" y="7" width="19" height="15" fill="#000"/><rect x="1" y="8" width="17" height="13" fill="#fff"/><rect x="1" y="8" width="17" height="2" fill="#848284"/><rect x="1" y="19" width="17" height="2" fill="#848284"/><rect x="2" y="13" width="2" height="5" fill="#00f"/><rect x="5" y="14" width="2" height="4" fill="#00f"/><rect x="8" y="12" width="2" height="6" fill="#00f"/><rect x="11" y="12" width="2" height="6" fill="#00f"/><rect x="11" y="10" width="2" height="2" fill="#f00"/><rect x="14" y="12" width="2" height="6" fill="#00f"/><rect x="14" y="9" width="2" height="3" fill="#f00"/><rect x="12" y="12" width="19" height="16" fill="#000"/><rect x="13" y="13" width="17" height="14" fill="#c6c3c6"/><rect x="14" y="14" width="15" height="12" fill="#848284"/><rect x="15" y="15" width="13" height="2" fill="#fff"/><rect x="14" y="18" width="15" height="1" fill="#c6c3c6"/><rect x="21" y="18" width="1" height="8" fill="#c6c3c6"/><rect x="15" y="22" width="1" height="3" fill="#fff"/><rect x="23" y="22" width="1" height="3" fill="#fff"/><rect x="17" y="22" width="1" height="3" fill="#fff"/><rect x="25" y="22" width="1" height="3" fill="#fff"/><rect x="19" y="22" width="1" height="3" fill="#fff"/><rect x="27" y="22" width="1" height="3" fill="#fff"/></svg>
<div class="c" style="left:2px;top:719px;width:61px;color:#fff;line-height:13px;font-size:11px">More<br>Views...</div>
<div style="left:66px;top:118px;width:6px;height:630px;background:#000084"></div>
<div style="left:66px;top:117px;width:6px;height:1px;background:#e8e8e8"></div>
<div style="left:72px;top:117px;width:811px;height:615px;background:#fff"></div>
<div style="left:72px;top:117px;width:811px;height:29px;background:#c6c3c6;border-top:1px solid #c6c3c6;border-bottom:1px solid #848284"></div>
<div style="left:72px;top:118px;width:811px;height:1px;background:#fff"></div>
<div style="left:107px;top:117px;width:1px;height:29px;background:#848284"></div>
<div style="left:72px;top:118px;width:1px;height:27px;background:#fff"></div>
<div style="left:146px;top:117px;width:1px;height:29px;background:#848284"></div>
<div style="left:108px;top:118px;width:1px;height:27px;background:#fff"></div>
<svg style="left:112px;top:122px" width="11" height="11" shape-rendering="crispEdges"><rect x="3" y="0" width="1" height="1" fill="#00f"/><rect x="4" y="0" width="1" height="1" fill="#00f"/><rect x="5" y="0" width="1" height="1" fill="#00f"/><rect x="6" y="0" width="1" height="1" fill="#00f"/><rect x="7" y="0" width="1" height="1" fill="#00f"/><rect x="1" y="1" width="1" height="1" fill="#00f"/><rect x="2" y="1" width="1" height="1" fill="#00f"/><rect x="3" y="1" width="1" height="1" fill="#00f"/><rect x="4" y="1" width="1" height="1" fill="#00f"/><rect x="5" y="1" width="1" height="1" fill="#00f"/><rect x="6" y="1" width="1" height="1" fill="#00f"/><rect x="7" y="1" width="1" height="1" fill="#00f"/><rect x="8" y="1" width="1" height="1" fill="#00f"/><rect x="9" y="1" width="1" height="1" fill="#00f"/><rect x="1" y="2" width="1" height="1" fill="#00f"/><rect x="2" y="2" width="1" height="1" fill="#00f"/><rect x="3" y="2" width="1" height="1" fill="#00f"/><rect x="4" y="2" width="1" height="1" fill="#fff"/><rect x="5" y="2" width="1" height="1" fill="#fff"/><rect x="6" y="2" width="1" height="1" fill="#fff"/><rect x="7" y="2" width="1" height="1" fill="#00f"/><rect x="8" y="2" width="1" height="1" fill="#00f"/><rect x="9" y="2" width="1" height="1" fill="#00f"/><rect x="0" y="3" width="1" height="1" fill="#00f"/><rect x="1" y="3" width="1" height="1" fill="#00f"/><rect x="2" y="3" width="1" height="1" fill="#00f"/><rect x="3" y="3" width="1" height="1" fill="#00f"/><rect x="4" y="3" width="1" height="1" fill="#00f"/><rect x="5" y="3" width="1" height="1" fill="#00f"/><rect x="6" y="3" width="1" height="1" fill="#00f"/><rect x="7" y="3" width="1" height="1" fill="#00f"/><rect x="8" y="3" width="1" height="1" fill="#00f"/><rect x="9" y="3" width="1" height="1" fill="#00f"/><rect x="10" y="3" width="1" height="1" fill="#00f"/><rect x="0" y="4" width="1" height="1" fill="#00f"/><rect x="1" y="4" width="1" height="1" fill="#00f"/><rect x="2" y="4" width="1" height="1" fill="#00f"/><rect x="3" y="4" width="1" height="1" fill="#fff"/><rect x="4" y="4" width="1" height="1" fill="#fff"/><rect x="5" y="4" width="1" height="1" fill="#fff"/><rect x="6" y="4" width="1" height="1" fill="#fff"/><rect x="7" y="4" width="1" height="1" fill="#00f"/><rect x="8" y="4" width="1" height="1" fill="#00f"/><rect x="9" y="4" width="1" height="1" fill="#00f"/><rect x="10" y="4" width="1" height="1" fill="#00f"/><rect x="0" y="5" width="1" height="1" fill="#00f"/><rect x="1" y="5" width="1" height="1" fill="#00f"/><rect x="2" y="5" width="1" height="1" fill="#00f"/><rect x="3" y="5" width="1" height="1" fill="#00f"/><rect x="4" y="5" width="1" height="1" fill="#fff"/><rect x="5" y="5" width="1" height="1" fill="#fff"/><rect x="6" y="5" width="1" height="1" fill="#fff"/><rect x="7" y="5" width="1" height="1" fill="#00f"/><rect x="8" y="5" width="1" height="1" fill="#00f"/><rect x="9" y="5" width="1" height="1" fill="#00f"/><rect x="10" y="5" width="1" height="1" fill="#00f"/><rect x="0" y="6" width="1" height="1" fill="#00f"/><rect x="1" y="6" width="1" height="1" fill="#00f"/><rect x="2" y="6" width="1" height="1" fill="#00f"/><rect x="3" y="6" width="1" height="1" fill="#00f"/><rect x="4" y="6" width="1" height="1" fill="#fff"/><rect x="5" y="6" width="1" height="1" fill="#fff"/><rect x="6" y="6" width="1" height="1" fill="#fff"/><rect x="7" y="6" width="1" height="1" fill="#00f"/><rect x="8" y="6" width="1" height="1" fill="#00f"/><rect x="9" y="6" width="1" height="1" fill="#00f"/><rect x="10" y="6" width="1" height="1" fill="#00f"/><rect x="0" y="7" width="1" height="1" fill="#00f"/><rect x="1" y="7" width="1" height="1" fill="#00f"/><rect x="2" y="7" width="1" height="1" fill="#00f"/><rect x="3" y="7" width="1" height="1" fill="#00f"/><rect x="4" y="7" width="1" height="1" fill="#fff"/><rect x="5" y="7" width="1" height="1" fill="#fff"/><rect x="6" y="7" width="1" height="1" fill="#fff"/><rect x="7" y="7" width="1" height="1" fill="#00f"/><rect x="8" y="7" width="1" height="1" fill="#00f"/><rect x="9" y="7" width="1" height="1" fill="#00f"/><rect x="10" y="7" width="1" height="1" fill="#00f"/><rect x="1" y="8" width="1" height="1" fill="#00f"/><rect x="2" y="8" width="1" height="1" fill="#00f"/><rect x="3" y="8" width="1" height="1" fill="#fff"/><rect x="4" y="8" width="1" height="1" fill="#fff"/><rect x="5" y="8" width="1" height="1" fill="#fff"/><rect x="6" y="8" width="1" height="1" fill="#fff"/><rect x="7" y="8" width="1" height="1" fill="#fff"/><rect x="8" y="8" width="1" height="1" fill="#00f"/><rect x="9" y="8" width="1" height="1" fill="#00f"/><rect x="1" y="9" width="1" height="1" fill="#00f"/><rect x="2" y="9" width="1" height="1" fill="#00f"/><rect x="3" y="9" width="1" height="1" fill="#00f"/><rect x="4" y="9" width="1" height="1" fill="#00f"/><rect x="5" y="9" width="1" height="1" fill="#00f"/><rect x="6" y="9" width="1" height="1" fill="#00f"/><rect x="7" y="9" width="1" height="1" fill="#00f"/><rect x="8" y="9" width="1" height="1" fill="#00f"/><rect x="9" y="9" width="1" height="1" fill="#00f"/><rect x="3" y="10" width="1" height="1" fill="#00f"/><rect x="4" y="10" width="1" height="1" fill="#00f"/><rect x="5" y="10" width="1" height="1" fill="#00f"/><rect x="6" y="10" width="1" height="1" fill="#00f"/><rect x="7" y="10" width="1" height="1" fill="#00f"/></svg>
<div style="left:209px;top:117px;width:1px;height:29px;background:#848284"></div>
<div style="left:147px;top:118px;width:1px;height:27px;background:#fff"></div>
<div class="t" style="left:150px;top:120px;">% Complete</div>
<div style="left:272px;top:117px;width:1px;height:29px;background:#848284"></div>
<div style="left:210px;top:118px;width:1px;height:27px;background:#fff"></div>
<div class="t c" style="left:210px;top:120px;width:62px">WBS</div>
<div style="left:533px;top:117px;width:1px;height:29px;background:#848284"></div>
<div style="left:273px;top:118px;width:1px;height:27px;background:#fff"></div>
<div class="t" style="left:276px;top:120px;">Task Name</div>
<div style="left:596px;top:117px;width:1px;height:29px;background:#848284"></div>
<div style="left:534px;top:118px;width:1px;height:27px;background:#fff"></div>
<div class="t c" style="left:534px;top:120px;width:62px">Work</div>
<div style="left:659px;top:117px;width:1px;height:29px;background:#848284"></div>
<div style="left:597px;top:118px;width:1px;height:27px;background:#fff"></div>
<div class="t c" style="left:597px;top:120px;width:62px">Duration</div>
<div style="left:734px;top:117px;width:1px;height:29px;background:#848284"></div>
<div style="left:660px;top:118px;width:1px;height:27px;background:#fff"></div>
<div class="t c" style="left:660px;top:120px;width:74px">Start</div>
<div style="left:809px;top:117px;width:1px;height:29px;background:#848284"></div>
<div style="left:735px;top:118px;width:1px;height:27px;background:#fff"></div>
<div class="t c" style="left:735px;top:120px;width:74px">Finish</div>
<div style="left:883px;top:117px;width:1px;height:29px;background:#848284"></div>
<div style="left:810px;top:118px;width:1px;height:27px;background:#fff"></div>
<div class="t" style="left:813px;top:120px;">Predecessors</div>
<div style="left:72px;top:146px;width:35px;height:18px;background:#c6c3c6;border-top:1px solid #fff;border-left:1px solid #fff"></div>
<div style="left:72px;top:164px;width:35px;height:1px;background:#848284"></div>
<div class="t c" style="left:72px;top:147px;width:35px">125</div>
<div style="left:107px;top:164px;width:776px;height:1px;background:#c6c3c6"></div>
<div class="t r b" style="left:109px;top:148px;width:98px;letter-spacing:0.3px;">0%</div>
<div class="t r b" style="left:172px;top:148px;width:98px;letter-spacing:0.3px;">1.11</div>
<div class="t r b" style="left:496px;top:148px;width:98px;letter-spacing:0.3px;">0 hrs</div>
<div class="t r b" style="left:559px;top:148px;width:98px;letter-spacing:0.3px;">8 hrs?</div>
<div class="t r b" style="left:634px;top:148px;width:98px;letter-spacing:0.3px;">Fri 7/25/03</div>
<div class="t r b" style="left:709px;top:148px;width:98px;letter-spacing:0.3px;">Fri 7/25/03</div>
<div style="left:295px;top:149px;width:9px;height:9px;border:1px solid #848284;background:#fff"></div>
<div style="left:297px;top:153px;width:5px;height:1px;background:#000"></div>
<div class="g b" style="left:309px;top:148px;width:224px;letter-spacing:0.4px">UAT</div>
<div style="left:72px;top:165px;width:35px;height:18px;background:#c6c3c6;border-top:1px solid #fff;border-left:1px solid #fff"></div>
<div style="left:72px;top:183px;width:35px;height:1px;background:#848284"></div>
<div class="t c" style="left:72px;top:166px;width:35px">126</div>
<div style="left:107px;top:183px;width:776px;height:1px;background:#c6c3c6"></div>
<div class="t r" style="left:109px;top:167px;width:98px;">0%</div>
<div class="t r" style="left:172px;top:167px;width:98px;">1.11.1</div>
<div class="t r" style="left:496px;top:167px;width:98px;">0 hrs</div>
<div class="t r" style="left:559px;top:167px;width:98px;">8 hrs?</div>
<div class="t r" style="left:634px;top:167px;width:98px;">Fri 7/25/03</div>
<div class="t r" style="left:709px;top:167px;width:98px;">Fri 7/25/03</div>
<div class="g" style="left:327px;top:167px;width:204px">Qa verification / - All defects closed, All NCs closed</div>
<div style="left:72px;top:184px;width:35px;height:18px;background:#c6c3c6;border-top:1px solid #fff;border-left:1px solid #fff"></div>
<div style="left:72px;top:202px;width:35px;height:1px;background:#848284"></div>
<div class="t c" style="left:72px;top:185px;width:35px">127</div>
<div style="left:107px;top:202px;width:776px;height:1px;background:#c6c3c6"></div>
<div class="t r" style="left:109px;top:186px;width:98px;">0%</div>
<div class="t r" style="left:172px;top:186px;width:98px;">1.11.2</div>
<div class="t r" style="left:496px;top:186px;width:98px;">0 hrs</div>
<div class="t r" style="left:559px;top:186px;width:98px;">8 hrs?</div>
<div class="t r" style="left:634px;top:186px;width:98px;">Fri 7/25/03</div>
<div class="t r" style="left:709px;top:186px;width:98px;">Fri 7/25/03</div>
<div class="g" style="left:327px;top:186px;width:204px">Delivery for UAT with QA Approval</div>
<div style="left:72px;top:203px;width:35px;height:18px;background:#c6c3c6;border-top:1px solid #fff;border-left:1px solid #fff"></div>
<div style="left:72px;top:221px;width:35px;height:1px;background:#848284"></div>
<div class="t c" style="left:72px;top:204px;width:35px">128</div>
<div style="left:107px;top:221px;width:776px;height:1px;background:#c6c3c6"></div>
<div class="t r" style="left:109px;top:205px;width:98px;">0%</div>
<div class="t r" style="left:172px;top:205px;width:98px;">1.11.3</div>
<div class="t r" style="left:496px;top:205px;width:98px;">0 hrs</div>
<div class="t r" style="left:559px;top:205px;width:98px;">8 hrs?</div>
<div class="t r" style="left:634px;top:205px;width:98px;">Fri 7/25/03</div>
<div class="t r" style="left:709px;top:205px;width:98px;">Fri 7/25/03</div>
<div class="g" style="left:327px;top:205px;width:204px">UAT Defect recording - DRF, bug closure,</div>
<div style="left:72px;top:222px;width:35px;height:18px;background:#c6c3c6;border-top:1px solid #fff;border-left:1px solid #fff"></div>
<div style="left:72px;top:240px;width:35px;height:1px;background:#848284"></div>
<div class="t c" style="left:72px;top:223px;width:35px">129</div>
<div style="left:107px;top:240px;width:776px;height:1px;background:#c6c3c6"></div>
<div class="t r" style="left:109px;top:224px;width:98px;">0%</div>
<div class="t r" style="left:172px;top:224px;width:98px;">1.11.4</div>
<div class="t r" style="left:496px;top:224px;width:98px;">0 hrs</div>
<div class="t r" style="left:559px;top:224px;width:98px;">8 hrs?</div>
<div class="t r" style="left:634px;top:224px;width:98px;">Fri 7/25/03</div>
<div class="t r" style="left:709px;top:224px;width:98px;">Fri 7/25/03</div>
<div class="g" style="left:327px;top:224px;width:204px">User Acceptance Testing</div>
<div style="left:72px;top:241px;width:35px;height:18px;background:#c6c3c6;border-top:1px solid #fff;border-left:1px solid #fff"></div>
<div style="left:72px;top:259px;width:35px;height:1px;background:#848284"></div>
<div class="t c" style="left:72px;top:242px;width:35px">130</div>
<div style="left:107px;top:259px;width:776px;height:1px;background:#c6c3c6"></div>
<div class="t r" style="left:109px;top:243px;width:98px;">0%</div>
<div class="t r" style="left:172px;top:243px;width:98px;">1.11.5</div>
<div class="t r" style="left:496px;top:243px;width:98px;">0 hrs</div>
<div class="t r" style="left:559px;top:243px;width:98px;">8 hrs?</div>
<div class="t r" style="left:634px;top:243px;width:98px;">Fri 7/25/03</div>
<div class="t r" style="left:709px;top:243px;width:98px;">Fri 7/25/03</div>
<div class="g" style="left:327px;top:243px;width:204px">Post UAT Baseline- Production Baseline</div>
<div style="left:72px;top:260px;width:35px;height:18px;background:#c6c3c6;border-top:1px solid #fff;border-left:1px solid #fff"></div>
<div style="left:72px;top:278px;width:35px;height:1px;background:#848284"></div>
<div class="t c" style="left:72px;top:261px;width:35px">131</div>
<div style="left:107px;top:278px;width:776px;height:1px;background:#c6c3c6"></div>
<div class="t r b" style="left:109px;top:262px;width:98px;letter-spacing:0.3px;">0%</div>
<div class="t r b" style="left:172px;top:262px;width:98px;letter-spacing:0.3px;">1.12</div>
<div class="t r b" style="left:496px;top:262px;width:98px;letter-spacing:0.3px;">0 hrs</div>
<div class="t r b" style="left:559px;top:262px;width:98px;letter-spacing:0.3px;">8 hrs?</div>
<div class="t r b" style="left:634px;top:262px;width:98px;letter-spacing:0.3px;">Fri 7/25/03</div>
<div class="t r b" style="left:709px;top:262px;width:98px;letter-spacing:0.3px;">Fri 7/25/03</div>
<div style="left:295px;top:263px;width:9px;height:9px;border:1px solid #848284;background:#fff"></div>
<div style="left:297px;top:267px;width:5px;height:1px;background:#000"></div>
<div class="g b" style="left:309px;top:262px;width:224px;letter-spacing:0.4px">Project Reporting</div>
<div style="left:72px;top:279px;width:35px;height:18px;background:#c6c3c6;border-top:1px solid #fff;border-left:1px solid #fff"></div>
<div style="left:72px;top:297px;width:35px;height:1px;background:#848284"></div>
<div class="t c" style="left:72px;top:280px;width:35px">132</div>
<div style="left:107px;top:297px;width:776px;height:1px;background:#c6c3c6"></div>
<div class="t r" style="left:109px;top:281px;width:98px;">0%</div>
<div class="t r" style="left:172px;top:281px;width:98px;">1.12.1</div>
<div class="t r" style="left:496px;top:281px;width:98px;">0 hrs</div>
<div class="t r" style="left:559px;top:281px;width:98px;">8 hrs?</div>
<div class="t r" style="left:634px;top:281px;width:98px;">Fri 7/25/03</div>
<div class="t r" style="left:709px;top:281px;width:98px;">Fri 7/25/03</div>
<div class="g" style="left:327px;top:281px;width:204px">WPR Preparation</div>
<div style="left:72px;top:298px;width:35px;height:18px;background:#c6c3c6;border-top:1px solid #fff;border-left:1px solid #fff"></div>
<div style="left:72px;top:316px;width:35px;height:1px;background:#848284"></div>
<div class="t c" style="left:72px;top:299px;width:35px">133</div>
<div style="left:107px;top:316px;width:776px;height:1px;background:#c6c3c6"></div>
<div class="t r" style="left:109px;top:300px;width:98px;">0%</div>
<div class="t r" style="left:172px;top:300px;width:98px;">1.12.2</div>
<div class="t r" style="left:496px;top:300px;width:98px;">0 hrs</div>
<div class="t r" style="left:559px;top:300px;width:98px;">8 hrs?</div>
<div class="t r" style="left:634px;top:300px;width:98px;">Fri 7/25/03</div>
<div class="t r" style="left:709px;top:300px;width:98px;">Fri 7/25/03</div>
<div class="g" style="left:327px;top:300px;width:204px">WPR Preparation</div>
<div style="left:72px;top:317px;width:35px;height:18px;background:#c6c3c6;border-top:1px solid #fff;border-left:1px solid #fff"></div>
<div style="left:72px;top:335px;width:35px;height:1px;background:#848284"></div>
<div class="t c" style="left:72px;top:318px;width:35px">134</div>
<div style="left:107px;top:335px;width:776px;height:1px;background:#c6c3c6"></div>
<div class="t r" style="left:109px;top:319px;width:98px;">0%</div>
<div class="t r" style="left:172px;top:319px;width:98px;">1.12.3</div>
<div class="t r" style="left:496px;top:319px;width:98px;">0 hrs</div>
<div class="t r" style="left:559px;top:319px;width:98px;">8 hrs?</div>
<div class="t r" style="left:634px;top:319px;width:98px;">Fri 7/25/03</div>
<div class="t r" style="left:709px;top:319px;width:98px;">Fri 7/25/03</div>
<div class="g" style="left:327px;top:319px;width:204px">WPR Preparation</div>
<div style="left:72px;top:336px;width:35px;height:18px;background:#c6c3c6;border-top:1px solid #fff;border-left:1px solid #fff"></div>
<div style="left:72px;top:354px;width:35px;height:1px;background:#848284"></div>
<div class="t c" style="left:72px;top:337px;width:35px">135</div>
<div style="left:107px;top:354px;width:776px;height:1px;background:#c6c3c6"></div>
<div class="t r" style="left:109px;top:338px;width:98px;">0%</div>
<div class="t r" style="left:172px;top:338px;width:98px;">1.12.4</div>
<div class="t r" style="left:496px;top:338px;width:98px;">0 hrs</div>
<div class="t r" style="left:559px;top:338px;width:98px;">8 hrs?</div>
<div class="t r" style="left:634px;top:338px;width:98px;">Fri 7/25/03</div>
<div class="t r" style="left:709px;top:338px;width:98px;">Fri 7/25/03</div>
<div class="g" style="left:327px;top:338px;width:204px">QA including SCM Fortnightly Reviews + reviews</div>
<div style="left:72px;top:355px;width:35px;height:18px;background:#c6c3c6;border-top:1px solid #fff;border-left:1px solid #fff"></div>
<div style="left:72px;top:373px;width:35px;height:1px;background:#848284"></div>
<div class="t c" style="left:72px;top:356px;width:35px">136</div>
<div style="left:107px;top:373px;width:776px;height:1px;background:#c6c3c6"></div>
<div class="t r b" style="left:109px;top:357px;width:98px;letter-spacing:0.3px;">0%</div>
<div class="t r b" style="left:172px;top:357px;width:98px;letter-spacing:0.3px;">1.14</div>
<div class="t r b" style="left:496px;top:357px;width:98px;letter-spacing:0.3px;">0 hrs</div>
<div class="t r b" style="left:559px;top:357px;width:98px;letter-spacing:0.3px;">883 hrs</div>
<div class="t r b" style="left:634px;top:357px;width:98px;letter-spacing:0.3px;">Wed 7/30/03</div>
<div class="t r b" style="left:709px;top:357px;width:98px;letter-spacing:0.3px;">Wed 12/31/03</div>
<div style="left:295px;top:358px;width:9px;height:9px;border:1px solid #848284;background:#fff"></div>
<div style="left:297px;top:362px;width:5px;height:1px;background:#000"></div>
<div class="g b" style="left:309px;top:357px;width:224px;letter-spacing:0.4px">Weekly Progress Reporting</div>
<svg style="left:110px;top:357px" width="18" height="15"><path d="M3.5 5.5Q5 1.5 9 1.5Q13 1.5 14.5 5.5M14.5 8.5Q13 12.5 9 12.5Q5 12.5 3.5 8.5" fill="none" stroke="#000" stroke-width="1.3"/><path d="M12 4.5H17L14.5 8Z" fill="#000"/><path d="M1 9H6L3.5 5.5Z" fill="#000"/></svg>
<div style="left:72px;top:374px;width:35px;height:18px;background:#c6c3c6;border-top:1px solid #fff;border-left:1px solid #fff"></div>
<div style="left:72px;top:392px;width:35px;height:1px;background:#848284"></div>
<div class="t c" style="left:72px;top:375px;width:35px">137</div>
<div style="left:107px;top:392px;width:776px;height:1px;background:#c6c3c6"></div>
<div class="t r" style="left:109px;top:376px;width:98px;">0%</div>
<div class="t r" style="left:172px;top:376px;width:98px;">1.14.1</div>
<div class="t r" style="left:496px;top:376px;width:98px;">0 hrs</div>
<div class="t r" style="left:559px;top:376px;width:98px;">3 hrs</div>
<div class="t r" style="left:634px;top:376px;width:98px;">Wed 7/30/03</div>
<div class="t r" style="left:709px;top:376px;width:98px;">Wed 7/30/03</div>
<div class="g" style="left:327px;top:376px;width:204px">Weekly Progress Reporting 1</div>
<svg style="left:112px;top:376px" width="14" height="13" shape-rendering="crispEdges"><rect x="0" y="0" width="13" height="12" fill="#848284"/><rect x="1" y="1" width="6" height="1" fill="#000084"/><rect x="7" y="1" width="5" height="1" fill="#a8a8a8"/><rect x="1" y="3" width="2" height="2" fill="#fff"/><rect x="4" y="3" width="2" height="2" fill="#fff"/><rect x="7" y="3" width="2" height="2" fill="#fff"/><rect x="10" y="3" width="2" height="2" fill="#fff"/><rect x="1" y="6" width="2" height="2" fill="#fff"/><rect x="4" y="6" width="2" height="2" fill="#c6c3c6"/><rect x="7" y="6" width="2" height="2" fill="#fff"/><rect x="9" y="5" width="4" height="4" fill="#0000ff"/><rect x="1" y="9" width="2" height="2" fill="#fff"/><rect x="4" y="9" width="2" height="2" fill="#fff"/><rect x="7" y="9" width="2" height="2" fill="#fff"/><rect x="10" y="9" width="2" height="2" fill="#fff"/><rect x="13" y="0" width="1" height="13" fill="#000"/><rect x="0" y="12" width="14" height="1" fill="#000"/></svg>
<div style="left:72px;top:393px;width:35px;height:18px;background:#c6c3c6;border-top:1px solid #fff;border-left:1px solid #fff"></div>
<div style="left:72px;top:411px;width:35px;height:1px;background:#848284"></div>
<div class="t c" style="left:72px;top:394px;width:35px">138</div>
<div style="left:107px;top:411px;width:776px;height:1px;background:#c6c3c6"></div>
<div class="t r" style="left:109px;top:395px;width:98px;">0%</div>
<div class="t r" style="left:172px;top:395px;width:98px;">1.14.2</div>
<div class="t r" style="left:496px;top:395px;width:98px;">0 hrs</div>
<div class="t r" style="left:559px;top:395px;width:98px;">3 hrs</div>
<div class="t r" style="left:634px;top:395px;width:98px;">Wed 8/6/03</div>
<div class="t r" style="left:709px;top:395px;width:98px;">Wed 8/6/03</div>
<div class="g" style="left:327px;top:395px;width:204px">Weekly Progress Reporting 2</div>
<svg style="left:112px;top:395px" width="14" height="13" shape-rendering="crispEdges"><rect x="0" y="0" width="13" height="12" fill="#848284"/><rect x="1" y="1" width="6" height="1" fill="#000084"/><rect x="7" y="1" width="5" height="1" fill="#a8a8a8"/><rect x="1" y="3" width="2" height="2" fill="#fff"/><rect x="4" y="3" width="2" height="2" fill="#fff"/><rect x="7" y="3" width="2" height="2" fill="#fff"/><rect x="10" y="3" width="2" height="2" fill="#fff"/><rect x="1" y="6" width="2" height="2" fill="#fff"/><rect x="4" y="6" width="2" height="2" fill="#c6c3c6"/><rect x="7" y="6" width="2" height="2" fill="#fff"/><rect x="9" y="5" width="4" height="4" fill="#0000ff"/><rect x="1" y="9" width="2" height="2" fill="#fff"/><rect x="4" y="9" width="2" height="2" fill="#fff"/><rect x="7" y="9" width="2" height="2" fill="#fff"/><rect x="10" y="9" width="2" height="2" fill="#fff"/><rect x="13" y="0" width="1" height="13" fill="#000"/><rect x="0" y="12" width="14" height="1" fill="#000"/></svg>
<div style="left:72px;top:412px;width:35px;height:18px;background:#c6c3c6;border-top:1px solid #fff;border-left:1px solid #fff"></div>
<div style="left:72px;top:430px;width:35px;height:1px;background:#848284"></div>
<div class="t c" style="left:72px;top:413px;width:35px">139</div>
<div style="left:107px;top:430px;width:776px;height:1px;background:#c6c3c6"></div>
<div class="t r" style="left:109px;top:414px;width:98px;">0%</div>
<div class="t r" style="left:172px;top:414px;width:98px;">1.14.3</div>
<div class="t r" style="left:496px;top:414px;width:98px;">0 hrs</div>
<div class="t r" style="left:559px;top:414px;width:98px;">3 hrs</div>
<div class="t r" style="left:634px;top:414px;width:98px;">Wed 8/13/03</div>
<div class="t r" style="left:709px;top:414px;width:98px;">Wed 8/13/03</div>
<div class="g" style="left:327px;top:414px;width:204px">Weekly Progress Reporting 3</div>
<svg style="left:112px;top:414px" width="14" height="13" shape-rendering="crispEdges"><rect x="0" y="0" width="13" height="12" fill="#848284"/><rect x="1" y="1" width="6" height="1" fill="#000084"/><rect x="7" y="1" width="5" height="1" fill="#a8a8a8"/><rect x="1" y="3" width="2" height="2" fill="#fff"/><rect x="4" y="3" width="2" height="2" fill="#fff"/><rect x="7" y="3" width="2" height="2" fill="#fff"/><rect x="10" y="3" width="2" height="2" fill="#fff"/><rect x="1" y="6" width="2" height="2" fill="#fff"/><rect x="4" y="6" width="2" height="2" fill="#c6c3c6"/><rect x="7" y="6" width="2" height="2" fill="#fff"/><rect x="9" y="5" width="4" height="4" fill="#0000ff"/><rect x="1" y="9" width="2" height="2" fill="#fff"/><rect x="4" y="9" width="2" height="2" fill="#fff"/><rect x="7" y="9" width="2" height="2" fill="#fff"/><rect x="10" y="9" width="2" height="2" fill="#fff"/><rect x="13" y="0" width="1" height="13" fill="#000"/><rect x="0" y="12" width="14" height="1" fill="#000"/></svg>
<div style="left:72px;top:431px;width:35px;height:18px;background:#c6c3c6;border-top:1px solid #fff;border-left:1px solid #fff"></div>
<div style="left:72px;top:449px;width:35px;height:1px;background:#848284"></div>
<div class="t c" style="left:72px;top:432px;width:35px">140</div>
<div style="left:107px;top:449px;width:776px;height:1px;background:#c6c3c6"></div>
<div class="t r" style="left:109px;top:433px;width:98px;">0%</div>
<div class="t r" style="left:172px;top:433px;width:98px;">1.14.4</div>
<div class="t r" style="left:496px;top:433px;width:98px;">0 hrs</div>
<div class="t r" style="left:559px;top:433px;width:98px;">3 hrs</div>
<div class="t r" style="left:634px;top:433px;width:98px;">Wed 8/20/03</div>
<div class="t r" style="left:709px;top:433px;width:98px;">Wed 8/20/03</div>
<div class="g" style="left:327px;top:433px;width:204px">Weekly Progress Reporting 4</div>
<svg style="left:112px;top:433px" width="14" height="13" shape-rendering="crispEdges"><rect x="0" y="0" width="13" height="12" fill="#848284"/><rect x="1" y="1" width="6" height="1" fill="#000084"/><rect x="7" y="1" width="5" height="1" fill="#a8a8a8"/><rect x="1" y="3" width="2" height="2" fill="#fff"/><rect x="4" y="3" width="2" height="2" fill="#fff"/><rect x="7" y="3" width="2" height="2" fill="#fff"/><rect x="10" y="3" width="2" height="2" fill="#fff"/><rect x="1" y="6" width="2" height="2" fill="#fff"/><rect x="4" y="6" width="2" height="2" fill="#c6c3c6"/><rect x="7" y="6" width="2" height="2" fill="#fff"/><rect x="9" y="5" width="4" height="4" fill="#0000ff"/><rect x="1" y="9" width="2" height="2" fill="#fff"/><rect x="4" y="9" width="2" height="2" fill="#fff"/><rect x="7" y="9" width="2" height="2" fill="#fff"/><rect x="10" y="9" width="2" height="2" fill="#fff"/><rect x="13" y="0" width="1" height="13" fill="#000"/><rect x="0" y="12" width="14" height="1" fill="#000"/></svg>
<div style="left:72px;top:450px;width:35px;height:18px;background:#c6c3c6;border-top:1px solid #fff;border-left:1px solid #fff"></div>
<div style="left:72px;top:468px;width:35px;height:1px;background:#848284"></div>
<div class="t c" style="left:72px;top:451px;width:35px">141</div>
<div style="left:107px;top:468px;width:776px;height:1px;background:#c6c3c6"></div>
<div class="t r" style="left:109px;top:452px;width:98px;">0%</div>
<div class="t r" style="left:172px;top:452px;width:98px;">1.14.5</div>
<div class="t r" style="left:496px;top:452px;width:98px;">0 hrs</div>
<div class="t r" style="left:559px;top:452px;width:98px;">3 hrs</div>
<div class="t r" style="left:634px;top:452px;width:98px;">Wed 8/27/03</div>
<div class="t r" style="left:709px;top:452px;width:98px;">Wed 8/27/03</div>
<div class="g" style="left:327px;top:452px;width:204px">Weekly Progress Reporting 5</div>
<svg style="left:112px;top:452px" width="14" height="13" shape-rendering="crispEdges"><rect x="0" y="0" width="13" height="12" fill="#848284"/><rect x="1" y="1" width="6" height="1" fill="#000084"/><rect x="7" y="1" width="5" height="1" fill="#a8a8a8"/><rect x="1" y="3" width="2" height="2" fill="#fff"/><rect x="4" y="3" width="2" height="2" fill="#fff"/><rect x="7" y="3" width="2" height="2" fill="#fff"/><rect x="10" y="3" width="2" height="2" fill="#fff"/><rect x="1" y="6" width="2" height="2" fill="#fff"/><rect x="4" y="6" width="2" height="2" fill="#c6c3c6"/><rect x="7" y="6" width="2" height="2" fill="#fff"/><rect x="9" y="5" width="4" height="4" fill="#0000ff"/><rect x="1" y="9" width="2" height="2" fill="#fff"/><rect x="4" y="9" width="2" height="2" fill="#fff"/><rect x="7" y="9" width="2" height="2" fill="#fff"/><rect x="10" y="9" width="2" height="2" fill="#fff"/><rect x="13" y="0" width="1" height="13" fill="#000"/><rect x="0" y="12" width="14" height="1" fill="#000"/></svg>
<div style="left:72px;top:469px;width:35px;height:18px;background:#c6c3c6;border-top:1px solid #fff;border-left:1px solid #fff"></div>
<div style="left:72px;top:487px;width:35px;height:1px;background:#848284"></div>
<div class="t c" style="left:72px;top:470px;width:35px">142</div>
<div style="left:107px;top:487px;width:776px;height:1px;background:#c6c3c6"></div>
<div class="t r" style="left:109px;top:471px;width:98px;">0%</div>
<div class="t r" style="left:172px;top:471px;width:98px;">1.14.6</div>
<div class="t r" style="left:496px;top:471px;width:98px;">0 hrs</div>
<div class="t r" style="left:559px;top:471px;width:98px;">3 hrs</div>
<div class="t r" style="left:634px;top:471px;width:98px;">Wed 9/3/03</div>
<div class="t r" style="left:709px;top:471px;width:98px;">Wed 9/3/03</div>
<div class="g" style="left:327px;top:471px;width:204px">Weekly Progress Reporting 6</div>
<svg style="left:112px;top:471px" width="14" height="13" shape-rendering="crispEdges"><rect x="0" y="0" width="13" height="12" fill="#848284"/><rect x="1" y="1" width="6" height="1" fill="#000084"/><rect x="7" y="1" width="5" height="1" fill="#a8a8a8"/><rect x="1" y="3" width="2" height="2" fill="#fff"/><rect x="4" y="3" width="2" height="2" fill="#fff"/><rect x="7" y="3" width="2" height="2" fill="#fff"/><rect x="10" y="3" width="2" height="2" fill="#fff"/><rect x="1" y="6" width="2" height="2" fill="#fff"/><rect x="4" y="6" width="2" height="2" fill="#c6c3c6"/><rect x="7" y="6" width="2" height="2" fill="#fff"/><rect x="9" y="5" width="4" height="4" fill="#0000ff"/><rect x="1" y="9" width="2" height="2" fill="#fff"/><rect x="4" y="9" width="2" height="2" fill="#fff"/><rect x="7" y="9" width="2" height="2" fill="#fff"/><rect x="10" y="9" width="2" height="2" fill="#fff"/><rect x="13" y="0" width="1" height="13" fill="#000"/><rect x="0" y="12" width="14" height="1" fill="#000"/></svg>
<div style="left:72px;top:488px;width:35px;height:18px;background:#c6c3c6;border-top:1px solid #fff;border-left:1px solid #fff"></div>
<div style="left:72px;top:506px;width:35px;height:1px;background:#848284"></div>
<div class="t c" style="left:72px;top:489px;width:35px">143</div>
<div style="left:107px;top:506px;width:776px;height:1px;background:#c6c3c6"></div>
<div class="t r" style="left:109px;top:490px;width:98px;">0%</div>
<div class="t r" style="left:172px;top:490px;width:98px;">1.14.7</div>
<div class="t r" style="left:496px;top:490px;width:98px;">0 hrs</div>
<div class="t r" style="left:559px;top:490px;width:98px;">3 hrs</div>
<div class="t r" style="left:634px;top:490px;width:98px;">Wed 9/10/03</div>
<div class="t r" style="left:709px;top:490px;width:98px;">Wed 9/10/03</div>
<div class="g" style="left:327px;top:490px;width:204px">Weekly Progress Reporting 7</div>
<svg style="left:112px;top:490px" width="14" height="13" shape-rendering="crispEdges"><rect x="0" y="0" width="13" height="12" fill="#848284"/><rect x="1" y="1" width="6" height="1" fill="#000084"/><rect x="7" y="1" width="5" height="1" fill="#a8a8a8"/><rect x="1" y="3" width="2" height="2" fill="#fff"/><rect x="4" y="3" width="2" height="2" fill="#fff"/><rect x="7" y="3" width="2" height="2" fill="#fff"/><rect x="10" y="3" width="2" height="2" fill="#fff"/><rect x="1" y="6" width="2" height="2" fill="#fff"/><rect x="4" y="6" width="2" height="2" fill="#c6c3c6"/><rect x="7" y="6" width="2" height="2" fill="#fff"/><rect x="9" y="5" width="4" height="4" fill="#0000ff"/><rect x="1" y="9" width="2" height="2" fill="#fff"/><rect x="4" y="9" width="2" height="2" fill="#fff"/><rect x="7" y="9" width="2" height="2" fill="#fff"/><rect x="10" y="9" width="2" height="2" fill="#fff"/><rect x="13" y="0" width="1" height="13" fill="#000"/><rect x="0" y="12" width="14" height="1" fill="#000"/></svg>
<div style="left:72px;top:507px;width:35px;height:18px;background:#c6c3c6;border-top:1px solid #fff;border-left:1px solid #fff"></div>
<div style="left:72px;top:525px;width:35px;height:1px;background:#848284"></div>
<div class="t c" style="left:72px;top:508px;width:35px">144</div>
<div style="left:107px;top:525px;width:776px;height:1px;background:#c6c3c6"></div>
<div class="t r" style="left:109px;top:509px;width:98px;">0%</div>
<div class="t r" style="left:172px;top:509px;width:98px;">1.14.8</div>
<div class="t r" style="left:496px;top:509px;width:98px;">0 hrs</div>
<div class="t r" style="left:559px;top:509px;width:98px;">3 hrs</div>
<div class="t r" style="left:634px;top:509px;width:98px;">Wed 9/17/03</div>
<div class="t r" style="left:709px;top:509px;width:98px;">Wed 9/17/03</div>
<div class="g" style="left:327px;top:509px;width:204px">Weekly Progress Reporting 8</div>
<svg style="left:112px;top:509px" width="14" height="13" shape-rendering="crispEdges"><rect x="0" y="0" width="13" height="12" fill="#848284"/><rect x="1" y="1" width="6" height="1" fill="#000084"/><rect x="7" y="1" width="5" height="1" fill="#a8a8a8"/><rect x="1" y="3" width="2" height="2" fill="#fff"/><rect x="4" y="3" width="2" height="2" fill="#fff"/><rect x="7" y="3" width="2" height="2" fill="#fff"/><rect x="10" y="3" width="2" height="2" fill="#fff"/><rect x="1" y="6" width="2" height="2" fill="#fff"/><rect x="4" y="6" width="2" height="2" fill="#c6c3c6"/><rect x="7" y="6" width="2" height="2" fill="#fff"/><rect x="9" y="5" width="4" height="4" fill="#0000ff"/><rect x="1" y="9" width="2" height="2" fill="#fff"/><rect x="4" y="9" width="2" height="2" fill="#fff"/><rect x="7" y="9" width="2" height="2" fill="#fff"/><rect x="10" y="9" width="2" height="2" fill="#fff"/><rect x="13" y="0" width="1" height="13" fill="#000"/><rect x="0" y="12" width="14" height="1" fill="#000"/></svg>
<div style="left:72px;top:526px;width:35px;height:18px;background:#c6c3c6;border-top:1px solid #fff;border-left:1px solid #fff"></div>
<div style="left:72px;top:544px;width:35px;height:1px;background:#848284"></div>
<div class="t c" style="left:72px;top:527px;width:35px">145</div>
<div style="left:107px;top:544px;width:776px;height:1px;background:#c6c3c6"></div>
<div class="t r" style="left:109px;top:528px;width:98px;">0%</div>
<div class="t r" style="left:172px;top:528px;width:98px;">1.14.9</div>
<div class="t r" style="left:496px;top:528px;width:98px;">0 hrs</div>
<div class="t r" style="left:559px;top:528px;width:98px;">3 hrs</div>
<div class="t r" style="left:634px;top:528px;width:98px;">Wed 9/24/03</div>
<div class="t r" style="left:709px;top:528px;width:98px;">Wed 9/24/03</div>
<div class="g" style="left:327px;top:528px;width:204px">Weekly Progress Reporting 9</div>
<svg style="left:112px;top:528px" width="14" height="13" shape-rendering="crispEdges"><rect x="0" y="0" width="13" height="12" fill="#848284"/><rect x="1" y="1" width="6" height="1" fill="#000084"/><rect x="7" y="1" width="5" height="1" fill="#a8a8a8"/><rect x="1" y="3" width="2" height="2" fill="#fff"/><rect x="4" y="3" width="2" height="2" fill="#fff"/><rect x="7" y="3" width="2" height="2" fill="#fff"/><rect x="10" y="3" width="2" height="2" fill="#fff"/><rect x="1" y="6" width="2" height="2" fill="#fff"/><rect x="4" y="6" width="2" height="2" fill="#c6c3c6"/><rect x="7" y="6" width="2" height="2" fill="#fff"/><rect x="9" y="5" width="4" height="4" fill="#0000ff"/><rect x="1" y="9" width="2" height="2" fill="#fff"/><rect x="4" y="9" width="2" height="2" fill="#fff"/><rect x="7" y="9" width="2" height="2" fill="#fff"/><rect x="10" y="9" width="2" height="2" fill="#fff"/><rect x="13" y="0" width="1" height="13" fill="#000"/><rect x="0" y="12" width="14" height="1" fill="#000"/></svg>
<div style="left:72px;top:545px;width:35px;height:18px;background:#c6c3c6;border-top:1px solid #fff;border-left:1px solid #fff"></div>
<div style="left:72px;top:563px;width:35px;height:1px;background:#848284"></div>
<div class="t c" style="left:72px;top:546px;width:35px">146</div>
<div style="left:107px;top:563px;width:776px;height:1px;background:#c6c3c6"></div>
<div class="t r" style="left:109px;top:547px;width:98px;">0%</div>
<div class="t r" style="left:172px;top:547px;width:98px;">1.14.10</div>
<div class="t r" style="left:496px;top:547px;width:98px;">0 hrs</div>
<div class="t r" style="left:559px;top:547px;width:98px;">3 hrs</div>
<div class="t r" style="left:634px;top:547px;width:98px;">Wed 10/1/03</div>
<div class="t r" style="left:709px;top:547px;width:98px;">Wed 10/1/03</div>
<div class="g" style="left:327px;top:547px;width:204px">Weekly Progress Reporting 10</div>
<svg style="left:112px;top:547px" width="14" height="13" shape-rendering="crispEdges"><rect x="0" y="0" width="13" height="12" fill="#848284"/><rect x="1" y="1" width="6" height="1" fill="#000084"/><rect x="7" y="1" width="5" height="1" fill="#a8a8a8"/><rect x="1" y="3" width="2" height="2" fill="#fff"/><rect x="4" y="3" width="2" height="2" fill="#fff"/><rect x="7" y="3" width="2" height="2" fill="#fff"/><rect x="10" y="3" width="2" height="2" fill="#fff"/><rect x="1" y="6" width="2" height="2" fill="#fff"/><rect x="4" y="6" width="2" height="2" fill="#c6c3c6"/><rect x="7" y="6" width="2" height="2" fill="#fff"/><rect x="9" y="5" width="4" height="4" fill="#0000ff"/><rect x="1" y="9" width="2" height="2" fill="#fff"/><rect x="4" y="9" width="2" height="2" fill="#fff"/><rect x="7" y="9" width="2" height="2" fill="#fff"/><rect x="10" y="9" width="2" height="2" fill="#fff"/><rect x="13" y="0" width="1" height="13" fill="#000"/><rect x="0" y="12" width="14" height="1" fill="#000"/></svg>
<div style="left:72px;top:564px;width:35px;height:18px;background:#c6c3c6;border-top:1px solid #fff;border-left:1px solid #fff"></div>
<div style="left:72px;top:582px;width:35px;height:1px;background:#848284"></div>
<div class="t c" style="left:72px;top:565px;width:35px">147</div>
<div style="left:107px;top:582px;width:776px;height:1px;background:#c6c3c6"></div>
<div class="t r" style="left:109px;top:566px;width:98px;">0%</div>
<div class="t r" style="left:172px;top:566px;width:98px;">1.14.11</div>
<div class="t r" style="left:496px;top:566px;width:98px;">0 hrs</div>
<div class="t r" style="left:559px;top:566px;width:98px;">3 hrs</div>
<div class="t r" style="left:634px;top:566px;width:98px;">Wed 10/8/03</div>
<div class="t r" style="left:709px;top:566px;width:98px;">Wed 10/8/03</div>
<div class="g" style="left:327px;top:566px;width:204px">Weekly Progress Reporting 11</div>
<svg style="left:112px;top:566px" width="14" height="13" shape-rendering="crispEdges"><rect x="0" y="0" width="13" height="12" fill="#848284"/><rect x="1" y="1" width="6" height="1" fill="#000084"/><rect x="7" y="1" width="5" height="1" fill="#a8a8a8"/><rect x="1" y="3" width="2" height="2" fill="#fff"/><rect x="4" y="3" width="2" height="2" fill="#fff"/><rect x="7" y="3" width="2" height="2" fill="#fff"/><rect x="10" y="3" width="2" height="2" fill="#fff"/><rect x="1" y="6" width="2" height="2" fill="#fff"/><rect x="4" y="6" width="2" height="2" fill="#c6c3c6"/><rect x="7" y="6" width="2" height="2" fill="#fff"/><rect x="9" y="5" width="4" height="4" fill="#0000ff"/><rect x="1" y="9" width="2" height="2" fill="#fff"/><rect x="4" y="9" width="2" height="2" fill="#fff"/><rect x="7" y="9" width="2" height="2" fill="#fff"/><rect x="10" y="9" width="2" height="2" fill="#fff"/><rect x="13" y="0" width="1" height="13" fill="#000"/><rect x="0" y="12" width="14" height="1" fill="#000"/></svg>
<div style="left:72px;top:583px;width:35px;height:18px;background:#c6c3c6;border-top:1px solid #fff;border-left:1px solid #fff"></div>
<div style="left:72px;top:601px;width:35px;height:1px;background:#848284"></div>
<div class="t c" style="left:72px;top:584px;width:35px">148</div>
<div style="left:107px;top:601px;width:776px;height:1px;background:#c6c3c6"></div>
<div class="t r" style="left:109px;top:585px;width:98px;">0%</div>
<div class="t r" style="left:172px;top:585px;width:98px;">1.14.12</div>
<div class="t r" style="left:496px;top:585px;width:98px;">0 hrs</div>
<div class="t r" style="left:559px;top:585px;width:98px;">3 hrs</div>
<div class="t r" style="left:634px;top:585px;width:98px;">Wed 10/15/03</div>
<div class="t r" style="left:709px;top:585px;width:98px;">Wed 10/15/03</div>
<div class="g" style="left:327px;top:585px;width:204px">Weekly Progress Reporting 12</div>
<svg style="left:112px;top:585px" width="14" height="13" shape-rendering="crispEdges"><rect x="0" y="0" width="13" height="12" fill="#848284"/><rect x="1" y="1" width="6" height="1" fill="#000084"/><rect x="7" y="1" width="5" height="1" fill="#a8a8a8"/><rect x="1" y="3" width="2" height="2" fill="#fff"/><rect x="4" y="3" width="2" height="2" fill="#fff"/><rect x="7" y="3" width="2" height="2" fill="#fff"/><rect x="10" y="3" width="2" height="2" fill="#fff"/><rect x="1" y="6" width="2" height="2" fill="#fff"/><rect x="4" y="6" width="2" height="2" fill="#c6c3c6"/><rect x="7" y="6" width="2" height="2" fill="#fff"/><rect x="9" y="5" width="4" height="4" fill="#0000ff"/><rect x="1" y="9" width="2" height="2" fill="#fff"/><rect x="4" y="9" width="2" height="2" fill="#fff"/><rect x="7" y="9" width="2" height="2" fill="#fff"/><rect x="10" y="9" width="2" height="2" fill="#fff"/><rect x="13" y="0" width="1" height="13" fill="#000"/><rect x="0" y="12" width="14" height="1" fill="#000"/></svg>
<div style="left:72px;top:602px;width:35px;height:18px;background:#c6c3c6;border-top:1px solid #fff;border-left:1px solid #fff"></div>
<div style="left:72px;top:620px;width:35px;height:1px;background:#848284"></div>
<div class="t c" style="left:72px;top:603px;width:35px">149</div>
<div style="left:107px;top:620px;width:776px;height:1px;background:#c6c3c6"></div>
<div class="t r" style="left:109px;top:604px;width:98px;">0%</div>
<div class="t r" style="left:172px;top:604px;width:98px;">1.14.13</div>
<div class="t r" style="left:496px;top:604px;width:98px;">0 hrs</div>
<div class="t r" style="left:559px;top:604px;width:98px;">3 hrs</div>
<div class="t r" style="left:634px;top:604px;width:98px;">Wed 10/22/03</div>
<div class="t r" style="left:709px;top:604px;width:98px;">Wed 10/22/03</div>
<div class="g" style="left:327px;top:604px;width:204px">Weekly Progress Reporting 13</div>
<svg style="left:112px;top:604px" width="14" height="13" shape-rendering="crispEdges"><rect x="0" y="0" width="13" height="12" fill="#848284"/><rect x="1" y="1" width="6" height="1" fill="#000084"/><rect x="7" y="1" width="5" height="1" fill="#a8a8a8"/><rect x="1" y="3" width="2" height="2" fill="#fff"/><rect x="4" y="3" width="2" height="2" fill="#fff"/><rect x="7" y="3" width="2" height="2" fill="#fff"/><rect x="10" y="3" width="2" height="2" fill="#fff"/><rect x="1" y="6" width="2" height="2" fill="#fff"/><rect x="4" y="6" width="2" height="2" fill="#c6c3c6"/><rect x="7" y="6" width="2" height="2" fill="#fff"/><rect x="9" y="5" width="4" height="4" fill="#0000ff"/><rect x="1" y="9" width="2" height="2" fill="#fff"/><rect x="4" y="9" width="2" height="2" fill="#fff"/><rect x="7" y="9" width="2" height="2" fill="#fff"/><rect x="10" y="9" width="2" height="2" fill="#fff"/><rect x="13" y="0" width="1" height="13" fill="#000"/><rect x="0" y="12" width="14" height="1" fill="#000"/></svg>
<div style="left:72px;top:621px;width:35px;height:18px;background:#c6c3c6;border-top:1px solid #fff;border-left:1px solid #fff"></div>
<div style="left:72px;top:639px;width:35px;height:1px;background:#848284"></div>
<div class="t c" style="left:72px;top:622px;width:35px">150</div>
<div style="left:107px;top:639px;width:776px;height:1px;background:#c6c3c6"></div>
<div class="t r" style="left:109px;top:623px;width:98px;">0%</div>
<div class="t r" style="left:172px;top:623px;width:98px;">1.14.14</div>
<div class="t r" style="left:496px;top:623px;width:98px;">0 hrs</div>
<div class="t r" style="left:559px;top:623px;width:98px;">3 hrs</div>
<div class="t r" style="left:634px;top:623px;width:98px;">Wed 10/29/03</div>
<div class="t r" style="left:709px;top:623px;width:98px;">Wed 10/29/03</div>
<div class="g" style="left:327px;top:623px;width:204px">Weekly Progress Reporting 14</div>
<svg style="left:112px;top:623px" width="14" height="13" shape-rendering="crispEdges"><rect x="0" y="0" width="13" height="12" fill="#848284"/><rect x="1" y="1" width="6" height="1" fill="#000084"/><rect x="7" y="1" width="5" height="1" fill="#a8a8a8"/><rect x="1" y="3" width="2" height="2" fill="#fff"/><rect x="4" y="3" width="2" height="2" fill="#fff"/><rect x="7" y="3" width="2" height="2" fill="#fff"/><rect x="10" y="3" width="2" height="2" fill="#fff"/><rect x="1" y="6" width="2" height="2" fill="#fff"/><rect x="4" y="6" width="2" height="2" fill="#c6c3c6"/><rect x="7" y="6" width="2" height="2" fill="#fff"/><rect x="9" y="5" width="4" height="4" fill="#0000ff"/><rect x="1" y="9" width="2" height="2" fill="#fff"/><rect x="4" y="9" width="2" height="2" fill="#fff"/><rect x="7" y="9" width="2" height="2" fill="#fff"/><rect x="10" y="9" width="2" height="2" fill="#fff"/><rect x="13" y="0" width="1" height="13" fill="#000"/><rect x="0" y="12" width="14" height="1" fill="#000"/></svg>
<div style="left:72px;top:640px;width:35px;height:18px;background:#c6c3c6;border-top:1px solid #fff;border-left:1px solid #fff"></div>
<div style="left:72px;top:658px;width:35px;height:1px;background:#848284"></div>
<div class="t c" style="left:72px;top:641px;width:35px">151</div>
<div style="left:107px;top:658px;width:776px;height:1px;background:#c6c3c6"></div>
<div class="t r" style="left:109px;top:642px;width:98px;">0%</div>
<div class="t r" style="left:172px;top:642px;width:98px;">1.14.15</div>
<div class="t r" style="left:496px;top:642px;width:98px;">0 hrs</div>
<div class="t r" style="left:559px;top:642px;width:98px;">3 hrs</div>
<div class="t r" style="left:634px;top:642px;width:98px;">Wed 11/5/03</div>
<div class="t r" style="left:709px;top:642px;width:98px;">Wed 11/5/03</div>
<div class="g" style="left:327px;top:642px;width:204px">Weekly Progress Reporting 15</div>
<svg style="left:112px;top:642px" width="14" height="13" shape-rendering="crispEdges"><rect x="0" y="0" width="13" height="12" fill="#848284"/><rect x="1" y="1" width="6" height="1" fill="#000084"/><rect x="7" y="1" width="5" height="1" fill="#a8a8a8"/><rect x="1" y="3" width="2" height="2" fill="#fff"/><rect x="4" y="3" width="2" height="2" fill="#fff"/><rect x="7" y="3" width="2" height="2" fill="#fff"/><rect x="10" y="3" width="2" height="2" fill="#fff"/><rect x="1" y="6" width="2" height="2" fill="#fff"/><rect x="4" y="6" width="2" height="2" fill="#c6c3c6"/><rect x="7" y="6" width="2" height="2" fill="#fff"/><rect x="9" y="5" width="4" height="4" fill="#0000ff"/><rect x="1" y="9" width="2" height="2" fill="#fff"/><rect x="4" y="9" width="2" height="2" fill="#fff"/><rect x="7" y="9" width="2" height="2" fill="#fff"/><rect x="10" y="9" width="2" height="2" fill="#fff"/><rect x="13" y="0" width="1" height="13" fill="#000"/><rect x="0" y="12" width="14" height="1" fill="#000"/></svg>
<div style="left:72px;top:659px;width:35px;height:18px;background:#c6c3c6;border-top:1px solid #fff;border-left:1px solid #fff"></div>
<div style="left:72px;top:677px;width:35px;height:1px;background:#848284"></div>
<div class="t c" style="left:72px;top:660px;width:35px">152</div>
<div style="left:107px;top:677px;width:776px;height:1px;background:#c6c3c6"></div>
<div class="t r" style="left:109px;top:661px;width:98px;">0%</div>
<div class="t r" style="left:172px;top:661px;width:98px;">1.14.16</div>
<div class="t r" style="left:496px;top:661px;width:98px;">0 hrs</div>
<div class="t r" style="left:559px;top:661px;width:98px;">3 hrs</div>
<div class="t r" style="left:634px;top:661px;width:98px;">Wed 11/12/03</div>
<div class="t r" style="left:709px;top:661px;width:98px;">Wed 11/12/03</div>
<div class="g" style="left:327px;top:661px;width:204px">Weekly Progress Reporting 16</div>
<svg style="left:112px;top:661px" width="14" height="13" shape-rendering="crispEdges"><rect x="0" y="0" width="13" height="12" fill="#848284"/><rect x="1" y="1" width="6" height="1" fill="#000084"/><rect x="7" y="1" width="5" height="1" fill="#a8a8a8"/><rect x="1" y="3" width="2" height="2" fill="#fff"/><rect x="4" y="3" width="2" height="2" fill="#fff"/><rect x="7" y="3" width="2" height="2" fill="#fff"/><rect x="10" y="3" width="2" height="2" fill="#fff"/><rect x="1" y="6" width="2" height="2" fill="#fff"/><rect x="4" y="6" width="2" height="2" fill="#c6c3c6"/><rect x="7" y="6" width="2" height="2" fill="#fff"/><rect x="9" y="5" width="4" height="4" fill="#0000ff"/><rect x="1" y="9" width="2" height="2" fill="#fff"/><rect x="4" y="9" width="2" height="2" fill="#fff"/><rect x="7" y="9" width="2" height="2" fill="#fff"/><rect x="10" y="9" width="2" height="2" fill="#fff"/><rect x="13" y="0" width="1" height="13" fill="#000"/><rect x="0" y="12" width="14" height="1" fill="#000"/></svg>
<div style="left:72px;top:678px;width:35px;height:18px;background:#c6c3c6;border-top:1px solid #fff;border-left:1px solid #fff"></div>
<div style="left:72px;top:696px;width:35px;height:1px;background:#848284"></div>
<div class="t c" style="left:72px;top:679px;width:35px">153</div>
<div style="left:107px;top:696px;width:776px;height:1px;background:#c6c3c6"></div>
<div class="t r" style="left:109px;top:680px;width:98px;">0%</div>
<div class="t r" style="left:172px;top:680px;width:98px;">1.14.17</div>
<div class="t r" style="left:496px;top:680px;width:98px;">0 hrs</div>
<div class="t r" style="left:559px;top:680px;width:98px;">3 hrs</div>
<div class="t r" style="left:634px;top:680px;width:98px;">Wed 11/19/03</div>
<div class="t r" style="left:709px;top:680px;width:98px;">Wed 11/19/03</div>
<div class="g" style="left:327px;top:680px;width:204px">Weekly Progress Reporting 17</div>
<svg style="left:112px;top:680px" width="14" height="13" shape-rendering="crispEdges"><rect x="0" y="0" width="13" height="12" fill="#848284"/><rect x="1" y="1" width="6" height="1" fill="#000084"/><rect x="7" y="1" width="5" height="1" fill="#a8a8a8"/><rect x="1" y="3" width="2" height="2" fill="#fff"/><rect x="4" y="3" width="2" height="2" fill="#fff"/><rect x="7" y="3" width="2" height="2" fill="#fff"/><rect x="10" y="3" width="2" height="2" fill="#fff"/><rect x="1" y="6" width="2" height="2" fill="#fff"/><rect x="4" y="6" width="2" height="2" fill="#c6c3c6"/><rect x="7" y="6" width="2" height="2" fill="#fff"/><rect x="9" y="5" width="4" height="4" fill="#0000ff"/><rect x="1" y="9" width="2" height="2" fill="#fff"/><rect x="4" y="9" width="2" height="2" fill="#fff"/><rect x="7" y="9" width="2" height="2" fill="#fff"/><rect x="10" y="9" width="2" height="2" fill="#fff"/><rect x="13" y="0" width="1" height="13" fill="#000"/><rect x="0" y="12" width="14" height="1" fill="#000"/></svg>
<div style="left:72px;top:697px;width:35px;height:18px;background:#c6c3c6;border-top:1px solid #fff;border-left:1px solid #fff"></div>
<div style="left:72px;top:715px;width:35px;height:1px;background:#848284"></div>
<div class="t c" style="left:72px;top:698px;width:35px">154</div>
<div style="left:107px;top:715px;width:776px;height:1px;background:#c6c3c6"></div>
<div class="t r" style="left:109px;top:699px;width:98px;">0%</div>
<div class="t r" style="left:172px;top:699px;width:98px;">1.14.18</div>
<div class="t r" style="left:496px;top:699px;width:98px;">0 hrs</div>
<div class="t r" style="left:559px;top:699px;width:98px;">3 hrs</div>
<div class="t r" style="left:634px;top:699px;width:98px;">Wed 11/26/03</div>
<div class="t r" style="left:709px;top:699px;width:98px;">Wed 11/26/03</div>
<div class="g" style="left:327px;top:699px;width:204px">Weekly Progress Reporting 18</div>
<svg style="left:112px;top:699px" width="14" height="13" shape-rendering="crispEdges"><rect x="0" y="0" width="13" height="12" fill="#848284"/><rect x="1" y="1" width="6" height="1" fill="#000084"/><rect x="7" y="1" width="5" height="1" fill="#a8a8a8"/><rect x="1" y="3" width="2" height="2" fill="#fff"/><rect x="4" y="3" width="2" height="2" fill="#fff"/><rect x="7" y="3" width="2" height="2" fill="#fff"/><rect x="10" y="3" width="2" height="2" fill="#fff"/><rect x="1" y="6" width="2" height="2" fill="#fff"/><rect x="4" y="6" width="2" height="2" fill="#c6c3c6"/><rect x="7" y="6" width="2" height="2" fill="#fff"/><rect x="9" y="5" width="4" height="4" fill="#0000ff"/><rect x="1" y="9" width="2" height="2" fill="#fff"/><rect x="4" y="9" width="2" height="2" fill="#fff"/><rect x="7" y="9" width="2" height="2" fill="#fff"/><rect x="10" y="9" width="2" height="2" fill="#fff"/><rect x="13" y="0" width="1" height="13" fill="#000"/><rect x="0" y="12" width="14" height="1" fill="#000"/></svg>
<div style="left:72px;top:716px;width:35px;height:18px;background:#c6c3c6;border-top:1px solid #fff;border-left:1px solid #fff"></div>
<div style="left:72px;top:734px;width:35px;height:1px;background:#848284"></div>
<div class="t c" style="left:72px;top:717px;width:35px">155</div>
<div style="left:107px;top:734px;width:776px;height:1px;background:#c6c3c6"></div>
<div class="t r" style="left:109px;top:718px;width:98px;">0%</div>
<div class="t r" style="left:172px;top:718px;width:98px;">1.14.19</div>
<div class="t r" style="left:496px;top:718px;width:98px;">0 hrs</div>
<div class="t r" style="left:559px;top:718px;width:98px;">3 hrs</div>
<div class="t r" style="left:634px;top:718px;width:98px;">Wed 12/3/03</div>
<div class="t r" style="left:709px;top:718px;width:98px;">Wed 12/3/03</div>
<div class="g" style="left:327px;top:718px;width:204px">Weekly Progress Reporting 19</div>
<svg style="left:112px;top:718px" width="14" height="13" shape-rendering="crispEdges"><rect x="0" y="0" width="13" height="12" fill="#848284"/><rect x="1" y="1" width="6" height="1" fill="#000084"/><rect x="7" y="1" width="5" height="1" fill="#a8a8a8"/><rect x="1" y="3" width="2" height="2" fill="#fff"/><rect x="4" y="3" width="2" height="2" fill="#fff"/><rect x="7" y="3" width="2" height="2" fill="#fff"/><rect x="10" y="3" width="2" height="2" fill="#fff"/><rect x="1" y="6" width="2" height="2" fill="#fff"/><rect x="4" y="6" width="2" height="2" fill="#c6c3c6"/><rect x="7" y="6" width="2" height="2" fill="#fff"/><rect x="9" y="5" width="4" height="4" fill="#0000ff"/><rect x="1" y="9" width="2" height="2" fill="#fff"/><rect x="4" y="9" width="2" height="2" fill="#fff"/><rect x="7" y="9" width="2" height="2" fill="#fff"/><rect x="10" y="9" width="2" height="2" fill="#fff"/><rect x="13" y="0" width="1" height="13" fill="#000"/><rect x="0" y="12" width="14" height="1" fill="#000"/></svg>
<div style="left:107px;top:146px;width:1px;height:586px;background:#848284"></div>
<div style="left:146px;top:146px;width:1px;height:586px;background:#c6c3c6"></div>
<div style="left:209px;top:146px;width:1px;height:586px;background:#c6c3c6"></div>
<div style="left:272px;top:146px;width:1px;height:586px;background:#c6c3c6"></div>
<div style="left:533px;top:146px;width:1px;height:586px;background:#c6c3c6"></div>
<div style="left:596px;top:146px;width:1px;height:586px;background:#c6c3c6"></div>
<div style="left:659px;top:146px;width:1px;height:586px;background:#c6c3c6"></div>
<div style="left:734px;top:146px;width:1px;height:586px;background:#c6c3c6"></div>
<div style="left:809px;top:146px;width:1px;height:586px;background:#c6c3c6"></div>
<div style="left:883px;top:146px;width:1px;height:586px;background:#c6c3c6"></div>
<div style="left:271px;top:353px;width:264px;height:22px;border:3px solid #000"></div>
<div style="left:530px;top:370px;width:7px;height:7px;background:#fff"></div>
<div style="left:531px;top:371px;width:5px;height:5px;background:#000"></div>
<div style="left:533px;top:376px;width:1px;height:1px;background:#c6c3c6"></div>
<div style="left:883px;top:117px;width:1px;height:631px;background:#848284"></div>
<div style="left:884px;top:117px;width:1px;height:631px;background:#fff"></div>
<div style="left:885px;top:117px;width:1px;height:631px;background:#c6c3c6"></div>
<div style="left:886px;top:117px;width:1px;height:631px;background:#848284"></div>
<div style="left:887px;top:117px;width:120px;height:615px;overflow:hidden;background:#fff">
<div style="left:0px;top:0px;width:120px;height:28px;background:#c6c3c6;border-bottom:1px solid #848284"></div>
<div style="left:0px;top:13px;width:120px;height:1px;background:#848284"></div>
<div style="left:62px;top:1px;width:1px;height:13px;background:#848284"></div>
<div class="t" style="left:66px;top:2px;">Jul 27, '03</div>
<div class="t" style="left:-46px;top:2px;">Jul 20, '03</div>
<div style="left:-2px;top:14px;width:1px;height:14px;background:#848284"></div>
<div class="t c" style="left:-2px;top:17px;width:16px">W</div>
<div style="left:14px;top:14px;width:1px;height:14px;background:#848284"></div>
<div class="t c" style="left:14px;top:17px;width:16px">T</div>
<div style="left:30px;top:14px;width:1px;height:14px;background:#848284"></div>
<div class="t c" style="left:30px;top:17px;width:16px">F</div>
<div style="left:46px;top:14px;width:1px;height:14px;background:#848284"></div>
<div class="t c" style="left:46px;top:17px;width:16px">S</div>
<div style="left:62px;top:14px;width:1px;height:14px;background:#848284"></div>
<div class="t c" style="left:62px;top:17px;width:16px">S</div>
<div style="left:78px;top:14px;width:1px;height:14px;background:#848284"></div>
<div class="t c" style="left:78px;top:17px;width:16px">M</div>
<div style="left:94px;top:14px;width:1px;height:14px;background:#848284"></div>
<div class="t c" style="left:94px;top:17px;width:16px">T</div>
<div style="left:110px;top:14px;width:1px;height:14px;background:#848284"></div>
<div class="t c" style="left:110px;top:17px;width:16px">W</div>
<svg style="left:0;top:29px" width="120" height="586" shape-rendering="crispEdges"><defs><pattern id="nw" x="46" y="0" width="4" height="2" patternUnits="userSpaceOnUse"><rect x="0" y="0" width="1" height="1" fill="#a8a8a8"/><rect x="2" y="1" width="1" height="1" fill="#a8a8a8"/></pattern><pattern id="bh" width="2" height="2" patternUnits="userSpaceOnUse"><rect width="2" height="2" fill="#fff"/><rect x="0" y="0" width="1" height="1" fill="#00f"/><rect x="1" y="1" width="1" height="1" fill="#00f"/></pattern><pattern id="dl" width="1" height="2" patternUnits="userSpaceOnUse"><rect x="0" y="0" width="1" height="1" fill="#808080"/></pattern></defs><rect x="46" y="0" width="32" height="586" fill="url(#nw)"/><rect x="30" y="0" width="1" height="586" fill="url(#dl)"/><rect x="62" y="0" width="1" height="586" fill="url(#dl)"/><path d="M25 4H52V10L47 15L42 10H35L30 15L25 10Z" fill="#000"/><rect x="30" y="4" width="1" height="1" fill="#fff"/><rect x="30" y="6" width="1" height="1" fill="#fff"/><rect x="30" y="8" width="1" height="1" fill="#fff"/><rect x="30" y="10" width="1" height="1" fill="#fff"/><rect x="30" y="12" width="1" height="1" fill="#fff"/><rect x="30" y="14" width="1" height="1" fill="#fff"/><rect x="31" y="23" width="16" height="11" fill="url(#bh)"/><rect x="31.5" y="23.5" width="15" height="10" fill="none" stroke="#00f"/><rect x="31" y="42" width="16" height="11" fill="url(#bh)"/><rect x="31.5" y="42.5" width="15" height="10" fill="none" stroke="#00f"/><rect x="31" y="61" width="16" height="11" fill="url(#bh)"/><rect x="31.5" y="61.5" width="15" height="10" fill="none" stroke="#00f"/><rect x="31" y="80" width="16" height="11" fill="url(#bh)"/><rect x="31.5" y="80.5" width="15" height="10" fill="none" stroke="#00f"/><rect x="31" y="99" width="16" height="11" fill="url(#bh)"/><rect x="31.5" y="99.5" width="15" height="10" fill="none" stroke="#00f"/><path d="M25 118H52V124L47 129L42 124H35L30 129L25 124Z" fill="#000"/><rect x="30" y="118" width="1" height="1" fill="#fff"/><rect x="30" y="120" width="1" height="1" fill="#fff"/><rect x="30" y="122" width="1" height="1" fill="#fff"/><rect x="30" y="124" width="1" height="1" fill="#fff"/><rect x="30" y="126" width="1" height="1" fill="#fff"/><rect x="30" y="128" width="1" height="1" fill="#fff"/><rect x="31" y="137" width="16" height="11" fill="url(#bh)"/><rect x="31.5" y="137.5" width="15" height="10" fill="none" stroke="#00f"/><rect x="31" y="156" width="16" height="11" fill="url(#bh)"/><rect x="31.5" y="156.5" width="15" height="10" fill="none" stroke="#00f"/><rect x="31" y="175" width="16" height="11" fill="url(#bh)"/><rect x="31.5" y="175.5" width="15" height="10" fill="none" stroke="#00f"/><rect x="31" y="194" width="16" height="11" fill="url(#bh)"/><rect x="31.5" y="194.5" width="15" height="10" fill="none" stroke="#00f"/><rect x="111" y="213" width="7" height="11" fill="url(#bh)"/><rect x="111.5" y="213.5" width="6" height="10" fill="none" stroke="#00f"/><rect x="111" y="232" width="7" height="11" fill="url(#bh)"/><rect x="111.5" y="232.5" width="6" height="10" fill="none" stroke="#00f"/></svg>
</div>
<div style="left:1007px;top:117px;width:17px;height:615px;" class="dith"></div>
<div style="left:1007px;top:118px;width:16px;height:15px;background:#c6c3c6;border-top:1px solid #c6c3c6;border-left:1px solid #c6c3c6;border-right:1px solid #000;border-bottom:1px solid #000;box-shadow:inset 1px 1px 0 #fff,inset -1px -1px 0 #848284;"></div>
<svg style="left:1012px;top:123px" width="7" height="4"><path d="M0 4H7L3.5 0.5Z" fill="#000"/></svg>
<div style="left:1007px;top:533px;width:16px;height:16px;background:#c6c3c6;border-top:1px solid #c6c3c6;border-left:1px solid #c6c3c6;border-right:1px solid #000;border-bottom:1px solid #000;box-shadow:inset 1px 1px 0 #fff,inset -1px -1px 0 #848284;"></div>
<div style="left:1007px;top:710px;width:16px;height:16px;background:#c6c3c6;border-top:1px solid #c6c3c6;border-left:1px solid #c6c3c6;border-right:1px solid #000;border-bottom:1px solid #000;box-shadow:inset 1px 1px 0 #fff,inset -1px -1px 0 #848284;"></div>
<svg style="left:1012px;top:716px" width="7" height="4"><path d="M0 0H7L3.5 3.5Z" fill="#000"/></svg>
<div style="left:1007px;top:726px;width:16px;height:6px;background:#c6c3c6;border-top:1px solid #c6c3c6;border-left:1px solid #c6c3c6;border-right:1px solid #000;border-bottom:1px solid #000;box-shadow:inset 1px 1px 0 #fff,inset -1px -1px 0 #848284;"></div>
<div style="left:72px;top:732px;width:811px;height:16px;" class="dith"></div>
<div style="left:72px;top:732px;width:16px;height:16px;background:#c6c3c6;border-top:1px solid #c6c3c6;border-left:1px solid #c6c3c6;border-right:1px solid #000;border-bottom:1px solid #000;box-shadow:inset 1px 1px 0 #fff,inset -1px -1px 0 #848284;"></div>
<svg style="left:77px;top:736px" width="4" height="7"><path d="M4 0V7L0.5 3.5Z" fill="#000"/></svg>
<div style="left:88px;top:732px;width:16px;height:16px;background:#c6c3c6;border-top:1px solid #c6c3c6;border-left:1px solid #c6c3c6;border-right:1px solid #000;border-bottom:1px solid #000;box-shadow:inset 1px 1px 0 #fff,inset -1px -1px 0 #848284;"></div>
<div style="left:866px;top:732px;width:16px;height:16px;background:#c6c3c6;border-top:1px solid #c6c3c6;border-left:1px solid #c6c3c6;border-right:1px solid #000;border-bottom:1px solid #000;box-shadow:inset 1px 1px 0 #fff,inset -1px -1px 0 #848284;"></div>
<svg style="left:872px;top:736px" width="4" height="7"><path d="M0 0V7L3.5 3.5Z" fill="#000"/></svg>
<div style="left:887px;top:732px;width:121px;height:16px;" class="dith"></div>
<div style="left:887px;top:732px;width:16px;height:16px;background:#c6c3c6;border-top:1px solid #c6c3c6;border-left:1px solid #c6c3c6;border-right:1px solid #000;border-bottom:1px solid #000;box-shadow:inset 1px 1px 0 #fff,inset -1px -1px 0 #848284;"></div>
<svg style="left:892px;top:736px" width="4" height="7"><path d="M4 0V7L0.5 3.5Z" fill="#000"/></svg>
<div style="left:903px;top:732px;width:16px;height:16px;background:#c6c3c6;border-top:1px solid #c6c3c6;border-left:1px solid #c6c3c6;border-right:1px solid #000;border-bottom:1px solid #000;box-shadow:inset 1px 1px 0 #fff,inset -1px -1px 0 #848284;"></div>
<div style="left:992px;top:732px;width:16px;height:16px;background:#c6c3c6;border-top:1px solid #c6c3c6;border-left:1px solid #c6c3c6;border-right:1px solid #000;border-bottom:1px solid #000;box-shadow:inset 1px 1px 0 #fff,inset -1px -1px 0 #848284;"></div>
<svg style="left:998px;top:736px" width="4" height="7"><path d="M0 0V7L3.5 3.5Z" fill="#000"/></svg>
<div style="left:1008px;top:732px;width:16px;height:16px;background:#c6c3c6"></div>
<div style="left:0px;top:748px;width:1024px;height:20px;background:#c6c3c6"></div>
<div style="left:0px;top:748px;width:1024px;height:1px;background:#fff"></div>
<div style="left:5px;top:751px;width:821px;height:17px;background:#c6c3c6;border-top:1px solid #848284;border-left:1px solid #848284;border-right:1px solid #fff;border-bottom:1px solid #fff;"></div>
<div class="t" style="left:9px;top:754px;">Ready</div>
<div style="left:829px;top:751px;width:33px;height:17px;background:#c6c3c6;border-top:1px solid #848284;border-left:1px solid #848284;border-right:1px solid #fff;border-bottom:1px solid #fff;"></div>
<div class="t c" style="left:829px;top:754px;width:33px;color:#848284;text-shadow:1px 1px 0 #fff">EXT</div>
<div style="left:865px;top:751px;width:38px;height:17px;background:#c6c3c6;border-top:1px solid #848284;border-left:1px solid #848284;border-right:1px solid #fff;border-bottom:1px solid #fff;"></div>
<div class="t c" style="left:865px;top:754px;width:38px;color:#848284;text-shadow:1px 1px 0 #fff">CAPS</div>
<div style="left:906px;top:751px;width:34px;height:17px;background:#c6c3c6;border-top:1px solid #848284;border-left:1px solid #848284;border-right:1px solid #fff;border-bottom:1px solid #fff;"></div>
<div class="t c" style="left:906px;top:754px;width:34px;color:#848284;text-shadow:1px 1px 0 #fff">NUM</div>
<div style="left:943px;top:751px;width:37px;height:17px;background:#c6c3c6;border-top:1px solid #848284;border-left:1px solid #848284;border-right:1px solid #fff;border-bottom:1px solid #fff;"></div>
<div class="t c" style="left:943px;top:754px;width:37px;color:#848284;text-shadow:1px 1px 0 #fff">SCRL</div>
<div style="left:983px;top:751px;width:33px;height:17px;background:#c6c3c6;border-top:1px solid #848284;border-left:1px solid #848284;border-right:1px solid #fff;border-bottom:1px solid #fff;"></div>
<div class="t c" style="left:983px;top:754px;width:33px;color:#848284;text-shadow:1px 1px 0 #fff">OVR</div>
</body></html>
